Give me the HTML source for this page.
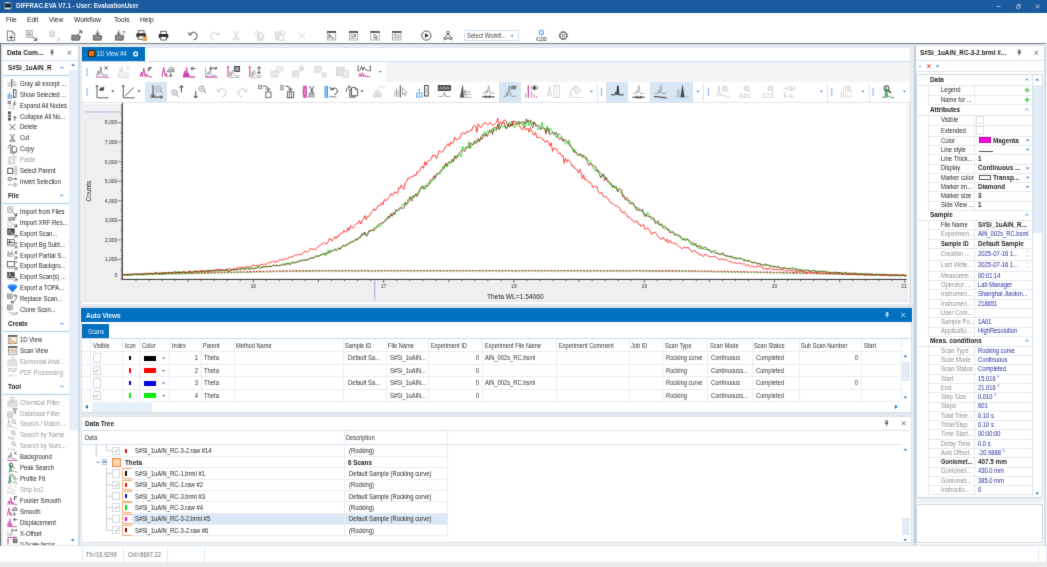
<!DOCTYPE html>
<html><head><meta charset="utf-8"><title>DIFFRAC.EVA V7.1</title>
<style>
html,body{margin:0;padding:0;background:#e4ebf3;}
body{width:1047px;height:567px;position:relative;overflow:hidden;font-family:"Liberation Sans",Arial,sans-serif;}
#app div,#app span{position:absolute;white-space:nowrap;}
#app{position:absolute;left:0;top:0;width:1047px;height:567px;overflow:hidden;}
#app{will-change:transform;}
svg{position:absolute;left:0;top:0;font-family:"Liberation Sans",Arial,sans-serif;}
</style></head><body>
<svg width="0" height="0" style="position:absolute"><defs><filter id="soft" x="0" y="0" width="100%" height="100%" color-interpolation-filters="sRGB"><feConvolveMatrix order="3" kernelMatrix="0.011 0.084 0.011 0.084 0.62 0.084 0.011 0.084 0.011" divisor="1" edgeMode="duplicate" preserveAlpha="true"/></filter></defs></svg>
<div id="app" style="filter:url(#soft)">
<div style="left:0px;top:0px;width:1047px;height:567px;background:#eef2f6;"></div>
<div style="left:0px;top:0px;width:1047px;height:12.8px;background:#1c5a9e;"></div>
<span style="top:1.35px;height:10px;line-height:10px;font-size:6.77px;color:#eef3f9;font-weight:bold;left:15.8px;transform:scaleX(0.906);transform-origin:0 50%;">DIFFRAC.EVA V7.1 - User: EvaluationUser</span>
<div style="left:3.6px;top:1.8px;width:8px;height:8.6px;background:#5b7f9e;border-radius:1px;"></div>
<div style="left:4.6px;top:3.6px;width:6px;height:3.4px;background:#1b2a38;"></div>
<div style="left:5.4px;top:7.6px;width:4.4px;height:1.6px;background:#dfe8f0;"></div>
<div style="left:6.2px;top:1.8px;width:3px;height:1.6px;background:#cfd8e0;"></div>
<div style="left:0px;top:12.8px;width:1047px;height:30.4px;background:#ffffff;"></div>
<span style="top:15.15px;height:10px;line-height:10px;font-size:6.99px;color:#222;left:5.7px;transform:scaleX(0.950);transform-origin:0 50%;">File</span>
<span style="top:15.15px;height:10px;line-height:10px;font-size:6.99px;color:#222;left:27px;transform:scaleX(0.950);transform-origin:0 50%;">Edit</span>
<span style="top:15.15px;height:10px;line-height:10px;font-size:6.99px;color:#222;left:49px;transform:scaleX(0.950);transform-origin:0 50%;">View</span>
<span style="top:15.15px;height:10px;line-height:10px;font-size:6.99px;color:#222;left:74.3px;transform:scaleX(0.950);transform-origin:0 50%;">Workflow</span>
<span style="top:15.15px;height:10px;line-height:10px;font-size:6.99px;color:#222;left:114px;transform:scaleX(0.950);transform-origin:0 50%;">Tools</span>
<span style="top:15.15px;height:10px;line-height:10px;font-size:6.99px;color:#222;left:140px;transform:scaleX(0.950);transform-origin:0 50%;">Help</span>
<div style="left:0px;top:43px;width:1046.2px;height:0.9px;background:#7d8186;"></div>
<div style="left:0px;top:43.9px;width:1046.2px;height:1.9px;background:#dfe6ec;"></div>
<div style="left:0px;top:43px;width:0.95px;height:503.3px;background:#6f7276;"></div>
<div style="left:0.95px;top:45.8px;width:1.8px;height:500.5px;background:#e4ebf1;"></div>
<div style="left:78px;top:45.8px;width:1.7px;height:500.5px;background:#d0dae2;"></div>
<div style="left:912.7px;top:45.8px;width:3.3px;height:500.5px;background:linear-gradient(90deg,#dfe6ec,#b8c7d2);"></div>
<div style="left:81px;top:305.8px;width:831.7px;height:1.9px;background:#d8dee3;"></div>
<div style="left:81px;top:413px;width:831.7px;height:2.6px;background:#e3e8ed;"></div>
<div style="left:0.95px;top:544.6px;width:1045.2px;height:1.7px;background:#dde5eb;"></div>
<div style="left:1044.2px;top:45.8px;width:1.9px;height:500.5px;background:#d5dee5;"></div>
<div style="left:463.5px;top:30.4px;width:55px;height:10.2px;background:#fff;border:0.6px solid #cfe0f0;box-sizing:border-box;"></div>
<span style="top:30.95px;height:10px;line-height:10px;font-size:6.45px;color:#444;left:467px;transform:scaleX(0.903);transform-origin:0 50%;">Select Workfl...</span>
<div style="left:2.75px;top:45.8px;width:75.25px;height:498.9px;background:#ffffff;"></div>
<span style="top:48.15px;height:10px;line-height:10px;font-size:6.88px;color:#1a1a1a;font-weight:bold;left:7.2px;transform:scaleX(0.967);transform-origin:0 50%;">Data Com...</span>
<div style="left:2.8px;top:60.2px;width:74.8px;height:0.8px;background:#cfdff0;"></div>
<div style="left:68.8px;top:70px;width:9.2px;height:359.5px;background:#e5eff9;"></div>
<span style="top:63.05px;height:10px;line-height:10px;font-size:6.77px;color:#1a1a1a;font-weight:bold;left:8.2px;transform:scaleX(0.937);transform-origin:0 50%;">S#Si_1uAlN_R</span>
<div style="left:2.8px;top:74.6px;width:66px;height:1px;background:#a9cdee;"></div>
<span style="top:190.75px;height:10px;line-height:10px;font-size:6.77px;color:#1a1a1a;font-weight:bold;left:8.2px;transform:scaleX(0.937);transform-origin:0 50%;">File</span>
<div style="left:2.8px;top:202.6px;width:66px;height:1px;background:#a9cdee;"></div>
<span style="top:319.05px;height:10px;line-height:10px;font-size:6.77px;color:#1a1a1a;font-weight:bold;left:8.2px;transform:scaleX(0.937);transform-origin:0 50%;">Create</span>
<div style="left:2.8px;top:331.3px;width:66px;height:1px;background:#a9cdee;"></div>
<span style="top:381.75px;height:10px;line-height:10px;font-size:6.77px;color:#1a1a1a;font-weight:bold;left:8.2px;transform:scaleX(0.937);transform-origin:0 50%;">Tool</span>
<div style="left:2.8px;top:393.6px;width:66px;height:1px;background:#a9cdee;"></div>
<span style="top:78.75px;height:10px;line-height:10px;font-size:6.67px;color:#262626;left:19.8px;transform:scaleX(0.893);transform-origin:0 50%;">Gray all except ...</span>
<span style="top:89.65px;height:10px;line-height:10px;font-size:6.67px;color:#262626;left:19.8px;transform:scaleX(0.893);transform-origin:0 50%;">Show Selected ...</span>
<span style="top:100.75px;height:10px;line-height:10px;font-size:6.67px;color:#262626;left:19.8px;transform:scaleX(0.893);transform-origin:0 50%;">Expand All Nodes</span>
<span style="top:111.55px;height:10px;line-height:10px;font-size:6.67px;color:#262626;left:19.8px;transform:scaleX(0.893);transform-origin:0 50%;">Collapse All No...</span>
<span style="top:122.45px;height:10px;line-height:10px;font-size:6.67px;color:#262626;left:19.8px;transform:scaleX(0.893);transform-origin:0 50%;">Delete</span>
<span style="top:133.35px;height:10px;line-height:10px;font-size:6.67px;color:#262626;left:19.8px;transform:scaleX(0.893);transform-origin:0 50%;">Cut</span>
<span style="top:144.35px;height:10px;line-height:10px;font-size:6.67px;color:#262626;left:19.8px;transform:scaleX(0.893);transform-origin:0 50%;">Copy</span>
<span style="top:155.35px;height:10px;line-height:10px;font-size:6.67px;color:#9a9a9a;left:19.8px;transform:scaleX(0.893);transform-origin:0 50%;">Paste</span>
<span style="top:166.15px;height:10px;line-height:10px;font-size:6.67px;color:#262626;left:19.8px;transform:scaleX(0.893);transform-origin:0 50%;">Select Parent</span>
<span style="top:177.05px;height:10px;line-height:10px;font-size:6.67px;color:#262626;left:19.8px;transform:scaleX(0.893);transform-origin:0 50%;">Invert Selection</span>
<span style="top:206.75px;height:10px;line-height:10px;font-size:6.67px;color:#262626;left:19.8px;transform:scaleX(0.893);transform-origin:0 50%;">Import from Files</span>
<span style="top:217.75px;height:10px;line-height:10px;font-size:6.67px;color:#262626;left:19.8px;transform:scaleX(0.893);transform-origin:0 50%;">Import XRF Res...</span>
<span style="top:228.75px;height:10px;line-height:10px;font-size:6.67px;color:#262626;left:19.8px;transform:scaleX(0.893);transform-origin:0 50%;">Export Scan...</span>
<span style="top:239.55px;height:10px;line-height:10px;font-size:6.67px;color:#262626;left:19.8px;transform:scaleX(0.893);transform-origin:0 50%;">Export Bg Subt...</span>
<span style="top:250.55px;height:10px;line-height:10px;font-size:6.67px;color:#262626;left:19.8px;transform:scaleX(0.893);transform-origin:0 50%;">Export Partial S...</span>
<span style="top:261.35px;height:10px;line-height:10px;font-size:6.67px;color:#262626;left:19.8px;transform:scaleX(0.893);transform-origin:0 50%;">Export Backgro...</span>
<span style="top:272.35px;height:10px;line-height:10px;font-size:6.67px;color:#262626;left:19.8px;transform:scaleX(0.893);transform-origin:0 50%;">Export Scan(s) ...</span>
<span style="top:283.35px;height:10px;line-height:10px;font-size:6.67px;color:#262626;left:19.8px;transform:scaleX(0.893);transform-origin:0 50%;">Export a TOPA...</span>
<span style="top:293.95px;height:10px;line-height:10px;font-size:6.67px;color:#262626;left:19.8px;transform:scaleX(0.893);transform-origin:0 50%;">Replace Scan...</span>
<span style="top:305.15px;height:10px;line-height:10px;font-size:6.67px;color:#262626;left:19.8px;transform:scaleX(0.893);transform-origin:0 50%;">Clone Scan...</span>
<span style="top:334.85px;height:10px;line-height:10px;font-size:6.67px;color:#262626;left:19.8px;transform:scaleX(0.893);transform-origin:0 50%;">1D View</span>
<span style="top:345.95px;height:10px;line-height:10px;font-size:6.67px;color:#262626;left:19.8px;transform:scaleX(0.893);transform-origin:0 50%;">Scan View</span>
<span style="top:356.75px;height:10px;line-height:10px;font-size:6.67px;color:#9a9a9a;left:19.8px;transform:scaleX(0.893);transform-origin:0 50%;">Elemental Anal...</span>
<span style="top:367.85px;height:10px;line-height:10px;font-size:6.67px;color:#9a9a9a;left:19.8px;transform:scaleX(0.893);transform-origin:0 50%;">PDF Processing</span>
<span style="top:397.75px;height:10px;line-height:10px;font-size:6.67px;color:#9a9a9a;left:19.8px;transform:scaleX(0.893);transform-origin:0 50%;">Chemical Filter</span>
<span style="top:408.65px;height:10px;line-height:10px;font-size:6.67px;color:#9a9a9a;left:19.8px;transform:scaleX(0.893);transform-origin:0 50%;">Database Filter</span>
<span style="top:419.35px;height:10px;line-height:10px;font-size:6.67px;color:#9a9a9a;left:19.8px;transform:scaleX(0.893);transform-origin:0 50%;">Search / Match ...</span>
<span style="top:430.35px;height:10px;line-height:10px;font-size:6.67px;color:#9a9a9a;left:19.8px;transform:scaleX(0.893);transform-origin:0 50%;">Search by Name</span>
<span style="top:441.35px;height:10px;line-height:10px;font-size:6.67px;color:#9a9a9a;left:19.8px;transform:scaleX(0.893);transform-origin:0 50%;">Search by Num...</span>
<span style="top:451.95px;height:10px;line-height:10px;font-size:6.67px;color:#262626;left:19.8px;transform:scaleX(0.893);transform-origin:0 50%;">Background</span>
<span style="top:463.05px;height:10px;line-height:10px;font-size:6.67px;color:#262626;left:19.8px;transform:scaleX(0.893);transform-origin:0 50%;">Peak Search</span>
<span style="top:473.95px;height:10px;line-height:10px;font-size:6.67px;color:#262626;left:19.8px;transform:scaleX(0.893);transform-origin:0 50%;">Profile Fit</span>
<span style="top:484.85px;height:10px;line-height:10px;font-size:6.67px;color:#9a9a9a;left:19.8px;transform:scaleX(0.893);transform-origin:0 50%;">Strip kα2</span>
<span style="top:495.95px;height:10px;line-height:10px;font-size:6.67px;color:#262626;left:19.8px;transform:scaleX(0.893);transform-origin:0 50%;">Fourier Smooth</span>
<span style="top:506.85px;height:10px;line-height:10px;font-size:6.67px;color:#262626;left:19.8px;transform:scaleX(0.893);transform-origin:0 50%;">Smooth</span>
<span style="top:517.75px;height:10px;line-height:10px;font-size:6.67px;color:#262626;left:19.8px;transform:scaleX(0.893);transform-origin:0 50%;">Displacement</span>
<span style="top:528.75px;height:10px;line-height:10px;font-size:6.67px;color:#262626;left:19.8px;transform:scaleX(0.893);transform-origin:0 50%;">X-Offset</span>
<div style="left:2.8px;top:538px;width:66px;height:6.6px;overflow:hidden;background:none"><span style="left:17px;top:0.5px;height:10px;line-height:10px;font-size:6.2px;color:#262626;letter-spacing:-0.24px">Y-Scale factor</span></div>
<div style="left:0px;top:546.3px;width:1047px;height:15.7px;background:#ffffff;"></div>
<div style="left:0px;top:562px;width:1047px;height:5px;background:#ebebeb;"></div>
<span style="top:549.95px;height:10px;line-height:10px;font-size:6.34px;color:#686868;left:86px;transform:scaleX(0.902);transform-origin:0 50%;">Th=16.9299</span>
<span style="top:549.95px;height:10px;line-height:10px;font-size:6.34px;color:#686868;left:128.4px;transform:scaleX(0.902);transform-origin:0 50%;">Cnt=8697.22</span>
<div style="left:81.5px;top:546.8px;width:0.8px;height:15.2px;background:#e1eaf4;"></div>
<div style="left:123px;top:546.8px;width:0.8px;height:15.2px;background:#e1eaf4;"></div>
<div style="left:167.4px;top:546.8px;width:0.8px;height:15.2px;background:#e1eaf4;"></div>
<div style="left:204px;top:546.8px;width:0.8px;height:15.2px;background:#e1eaf4;"></div>
<div style="left:1038.4px;top:546.8px;width:0.8px;height:15.2px;background:#e1eaf4;"></div>
<div style="left:1046.3px;top:546.8px;width:0.8px;height:15.2px;background:#e1eaf4;"></div>
<div style="left:81.4px;top:46.6px;width:830px;height:258px;background:#ffffff;border:0.7px solid #dbe3eb;box-sizing:border-box;"></div>
<div style="left:81.8px;top:46.8px;width:63.4px;height:14.1px;background:#0070c0;"></div>
<div style="left:88.2px;top:50.2px;width:6.4px;height:6.6px;background:#f36f0c;border:0.6px solid #3a2a1a;box-sizing:border-box;"></div>
<span style="top:49.25px;height:10px;line-height:10px;font-size:6.45px;color:#e8f1fa;left:97px;transform:scaleX(0.903);transform-origin:0 50%;">1D View #4</span>
<div style="left:81.8px;top:60.6px;width:828.2px;height:0.9px;background:#c7dcf0;"></div>
<div style="left:385.5px;top:61.6px;width:524.5px;height:20.2px;background:#f5f5f6;"></div>
<div style="left:145.2px;top:82.2px;width:21.7px;height:19.4px;background:#d6e6f4;"></div>
<div style="left:499.4px;top:82.2px;width:21.3px;height:19.4px;background:#d6e6f4;"></div>
<div style="left:606px;top:82.2px;width:21.7px;height:19.4px;background:#d6e6f4;"></div>
<div style="left:649.5px;top:82.2px;width:43.5px;height:19.4px;background:#d6e6f4;"></div>
<div style="left:596.8px;top:82.5px;width:0.8px;height:19px;background:#dfe6ee;"></div>
<div style="left:703.4px;top:82.5px;width:0.8px;height:19px;background:#dfe6ee;"></div>
<div style="left:826.7px;top:82.5px;width:0.8px;height:19px;background:#dfe6ee;"></div>
<div style="left:868.9px;top:82.5px;width:0.8px;height:19px;background:#dfe6ee;"></div>
<div style="left:81.8px;top:101.6px;width:828.2px;height:0.8px;background:#d0e0f0;"></div>
<div style="left:83.2px;top:102.4px;width:826.6px;height:199.9px;background:#ffffff;border:0.7px solid #dfe7ee;box-sizing:border-box;"></div>
<div style="left:84.4px;top:103.6px;width:824px;height:197px;background:#efefef;"></div>
<div style="left:122.6px;top:103.6px;width:784.5px;height:175.2px;background:#ffffff;"></div>
<div style="left:81.2px;top:307.7px;width:830.6px;height:105.3px;background:#ffffff;border:0.7px solid #d5dee6;box-sizing:border-box;"></div>
<div style="left:81.2px;top:307.7px;width:830.7px;height:14.1px;background:#0070c0;"></div>
<span style="top:310.65px;height:10px;line-height:10px;font-size:6.77px;color:#f2f7fc;font-weight:bold;left:85.6px;transform:scaleX(0.952);transform-origin:0 50%;">Auto Views</span>
<div style="left:82px;top:324px;width:27px;height:13.9px;background:#0070c0;"></div>
<span style="top:326.55px;height:10px;line-height:10px;font-size:6.45px;color:#e8f1fa;left:87.5px;transform:scaleX(0.903);transform-origin:0 50%;">Scans</span>
<div style="left:82px;top:338px;width:828px;height:0.8px;background:#c7dcf0;"></div>
<div style="left:82px;top:351.2px;width:818.8px;height:0.8px;background:#e9eef3;"></div>
<div style="left:82px;top:363.8px;width:818.8px;height:0.8px;background:#e9eef3;"></div>
<div style="left:82px;top:376.3px;width:818.8px;height:0.8px;background:#e9eef3;"></div>
<div style="left:82px;top:388.8px;width:818.8px;height:0.8px;background:#e9eef3;"></div>
<div style="left:82px;top:401.3px;width:818.8px;height:0.8px;background:#e9eef3;"></div>
<div style="left:90.2px;top:339px;width:0.8px;height:62.3px;background:#e9eef3;"></div>
<div style="left:122.3px;top:339px;width:0.8px;height:62.3px;background:#e9eef3;"></div>
<div style="left:139.3px;top:339px;width:0.8px;height:62.3px;background:#e9eef3;"></div>
<div style="left:169.3px;top:339px;width:0.8px;height:62.3px;background:#e9eef3;"></div>
<div style="left:200.6px;top:339px;width:0.8px;height:62.3px;background:#e9eef3;"></div>
<div style="left:233.6px;top:339px;width:0.8px;height:62.3px;background:#e9eef3;"></div>
<div style="left:342.7px;top:339px;width:0.8px;height:62.3px;background:#e9eef3;"></div>
<div style="left:385.7px;top:339px;width:0.8px;height:62.3px;background:#e9eef3;"></div>
<div style="left:428.2px;top:339px;width:0.8px;height:62.3px;background:#e9eef3;"></div>
<div style="left:482.3px;top:339px;width:0.8px;height:62.3px;background:#e9eef3;"></div>
<div style="left:556.2px;top:339px;width:0.8px;height:62.3px;background:#e9eef3;"></div>
<div style="left:628.8px;top:339px;width:0.8px;height:62.3px;background:#e9eef3;"></div>
<div style="left:662.1px;top:339px;width:0.8px;height:62.3px;background:#e9eef3;"></div>
<div style="left:707.2px;top:339px;width:0.8px;height:62.3px;background:#e9eef3;"></div>
<div style="left:751.8px;top:339px;width:0.8px;height:62.3px;background:#e9eef3;"></div>
<div style="left:798.5px;top:339px;width:0.8px;height:62.3px;background:#e9eef3;"></div>
<div style="left:861px;top:339px;width:0.8px;height:62.3px;background:#e9eef3;"></div>
<div style="left:900.8px;top:339px;width:0.8px;height:62.3px;background:#e9eef3;"></div>
<span style="top:340.75px;height:10px;line-height:10px;font-size:6.34px;color:#333;left:92.8px;transform:scaleX(0.895);transform-origin:0 50%;">Visible</span>
<span style="top:340.75px;height:10px;line-height:10px;font-size:6.34px;color:#333;left:124.9px;transform:scaleX(0.895);transform-origin:0 50%;">Icon</span>
<span style="top:340.75px;height:10px;line-height:10px;font-size:6.34px;color:#333;left:141.9px;transform:scaleX(0.895);transform-origin:0 50%;">Color</span>
<span style="top:340.75px;height:10px;line-height:10px;font-size:6.34px;color:#333;left:171.9px;transform:scaleX(0.895);transform-origin:0 50%;">Index</span>
<span style="top:340.75px;height:10px;line-height:10px;font-size:6.34px;color:#333;left:203.2px;transform:scaleX(0.895);transform-origin:0 50%;">Parent</span>
<span style="top:340.75px;height:10px;line-height:10px;font-size:6.34px;color:#333;left:236.2px;transform:scaleX(0.895);transform-origin:0 50%;">Method Name</span>
<span style="top:340.75px;height:10px;line-height:10px;font-size:6.34px;color:#333;left:345.3px;transform:scaleX(0.895);transform-origin:0 50%;">Sample ID</span>
<span style="top:340.75px;height:10px;line-height:10px;font-size:6.34px;color:#333;left:388.3px;transform:scaleX(0.895);transform-origin:0 50%;">File Name</span>
<span style="top:340.75px;height:10px;line-height:10px;font-size:6.34px;color:#333;left:430.8px;transform:scaleX(0.895);transform-origin:0 50%;">Experiment ID</span>
<span style="top:340.75px;height:10px;line-height:10px;font-size:6.34px;color:#333;left:484.9px;transform:scaleX(0.895);transform-origin:0 50%;">Experiment File Name</span>
<span style="top:340.75px;height:10px;line-height:10px;font-size:6.34px;color:#333;left:558.8px;transform:scaleX(0.895);transform-origin:0 50%;">Experiment Comment</span>
<span style="top:340.75px;height:10px;line-height:10px;font-size:6.34px;color:#333;left:631.4px;transform:scaleX(0.895);transform-origin:0 50%;">Job ID</span>
<span style="top:340.75px;height:10px;line-height:10px;font-size:6.34px;color:#333;left:664.7px;transform:scaleX(0.895);transform-origin:0 50%;">Scan Type</span>
<span style="top:340.75px;height:10px;line-height:10px;font-size:6.34px;color:#333;left:709.8px;transform:scaleX(0.895);transform-origin:0 50%;">Scan Mode</span>
<span style="top:340.75px;height:10px;line-height:10px;font-size:6.34px;color:#333;left:754.4px;transform:scaleX(0.895);transform-origin:0 50%;">Scan Status</span>
<span style="top:340.75px;height:10px;line-height:10px;font-size:6.34px;color:#333;left:801.1px;transform:scaleX(0.895);transform-origin:0 50%;">Sub Scan Number</span>
<span style="top:340.75px;height:10px;line-height:10px;font-size:6.34px;color:#333;left:863.6px;transform:scaleX(0.895);transform-origin:0 50%;">Start</span>
<div style="left:92.6px;top:353.4px;width:8.3px;height:9.3px;background:#fff;border:0.6px solid #d3dae1;box-sizing:border-box;"></div>
<div style="left:129.2px;top:355.7px;width:1.9px;height:4.6px;background:#000000;"></div>
<div style="left:144px;top:355.7px;width:12px;height:4.9px;background:#000000;"></div>
<span style="top:353.45px;height:10px;line-height:10px;font-size:6.45px;color:#333;left:-102px;width:300px;text-align:right;transform:scaleX(0.903);transform-origin:100% 50%;">1</span>
<span style="top:353.45px;height:10px;line-height:10px;font-size:6.45px;color:#333;left:203.8px;transform:scaleX(0.903);transform-origin:0 50%;">Theta</span>
<span style="top:353.45px;height:10px;line-height:10px;font-size:6.45px;color:#333;left:347.5px;transform:scaleX(0.903);transform-origin:0 50%;">Default Sa...</span>
<span style="top:353.45px;height:10px;line-height:10px;font-size:6.45px;color:#333;left:390.3px;transform:scaleX(0.896);transform-origin:0 50%;">S#Si_1uAlN...</span>
<span style="top:353.45px;height:10px;line-height:10px;font-size:6.45px;color:#333;left:179px;width:300px;text-align:right;transform:scaleX(0.903);transform-origin:100% 50%;">0</span>
<span style="top:353.45px;height:10px;line-height:10px;font-size:6.45px;color:#333;left:484.6px;transform:scaleX(0.896);transform-origin:0 50%;">AlN_002s_RC.bsml</span>
<span style="top:353.45px;height:10px;line-height:10px;font-size:6.45px;color:#333;left:666px;transform:scaleX(0.896);transform-origin:0 50%;">Rocking curve</span>
<span style="top:353.45px;height:10px;line-height:10px;font-size:6.45px;color:#333;left:711px;transform:scaleX(0.896);transform-origin:0 50%;">Continuous</span>
<span style="top:353.45px;height:10px;line-height:10px;font-size:6.45px;color:#333;left:756px;transform:scaleX(0.896);transform-origin:0 50%;">Completed</span>
<span style="top:353.45px;height:10px;line-height:10px;font-size:6.45px;color:#333;left:558px;width:300px;text-align:right;transform:scaleX(0.903);transform-origin:100% 50%;">0</span>
<div style="left:92.6px;top:365.9px;width:8.3px;height:9.3px;background:#fff;border:0.6px solid #d3dae1;box-sizing:border-box;"></div>
<div style="left:129.2px;top:368.2px;width:1.9px;height:4.6px;background:#ff0000;"></div>
<div style="left:144px;top:368.2px;width:12px;height:4.9px;background:#ff0000;"></div>
<span style="top:365.95px;height:10px;line-height:10px;font-size:6.45px;color:#333;left:-102px;width:300px;text-align:right;transform:scaleX(0.903);transform-origin:100% 50%;">2</span>
<span style="top:365.95px;height:10px;line-height:10px;font-size:6.45px;color:#333;left:203.8px;transform:scaleX(0.903);transform-origin:0 50%;">Theta</span>
<span style="top:365.95px;height:10px;line-height:10px;font-size:6.45px;color:#333;left:390.3px;transform:scaleX(0.896);transform-origin:0 50%;">S#Si_1uAlN...</span>
<span style="top:365.95px;height:10px;line-height:10px;font-size:6.45px;color:#333;left:179px;width:300px;text-align:right;transform:scaleX(0.903);transform-origin:100% 50%;">0</span>
<span style="top:365.95px;height:10px;line-height:10px;font-size:6.45px;color:#333;left:666px;transform:scaleX(0.896);transform-origin:0 50%;">Rocking</span>
<span style="top:365.95px;height:10px;line-height:10px;font-size:6.45px;color:#333;left:711px;transform:scaleX(0.896);transform-origin:0 50%;">Continuouss...</span>
<span style="top:365.95px;height:10px;line-height:10px;font-size:6.45px;color:#333;left:756px;transform:scaleX(0.896);transform-origin:0 50%;">Completed</span>
<div style="left:92.6px;top:378.4px;width:8.3px;height:9.3px;background:#fff;border:0.6px solid #d3dae1;box-sizing:border-box;"></div>
<div style="left:129.2px;top:380.7px;width:1.9px;height:4.6px;background:#0000e0;"></div>
<div style="left:144px;top:380.7px;width:12px;height:4.9px;background:#0000e0;"></div>
<span style="top:378.45px;height:10px;line-height:10px;font-size:6.45px;color:#333;left:-102px;width:300px;text-align:right;transform:scaleX(0.903);transform-origin:100% 50%;">3</span>
<span style="top:378.45px;height:10px;line-height:10px;font-size:6.45px;color:#333;left:203.8px;transform:scaleX(0.903);transform-origin:0 50%;">Theta</span>
<span style="top:378.45px;height:10px;line-height:10px;font-size:6.45px;color:#333;left:347.5px;transform:scaleX(0.903);transform-origin:0 50%;">Default Sa...</span>
<span style="top:378.45px;height:10px;line-height:10px;font-size:6.45px;color:#333;left:390.3px;transform:scaleX(0.896);transform-origin:0 50%;">S#Si_1uAlN...</span>
<span style="top:378.45px;height:10px;line-height:10px;font-size:6.45px;color:#333;left:179px;width:300px;text-align:right;transform:scaleX(0.903);transform-origin:100% 50%;">0</span>
<span style="top:378.45px;height:10px;line-height:10px;font-size:6.45px;color:#333;left:484.6px;transform:scaleX(0.896);transform-origin:0 50%;">AlN_002s_RC.bsml</span>
<span style="top:378.45px;height:10px;line-height:10px;font-size:6.45px;color:#333;left:666px;transform:scaleX(0.896);transform-origin:0 50%;">Rocking curve</span>
<span style="top:378.45px;height:10px;line-height:10px;font-size:6.45px;color:#333;left:711px;transform:scaleX(0.896);transform-origin:0 50%;">Continuous</span>
<span style="top:378.45px;height:10px;line-height:10px;font-size:6.45px;color:#333;left:756px;transform:scaleX(0.896);transform-origin:0 50%;">Completed</span>
<span style="top:378.45px;height:10px;line-height:10px;font-size:6.45px;color:#333;left:558px;width:300px;text-align:right;transform:scaleX(0.903);transform-origin:100% 50%;">0</span>
<div style="left:92.6px;top:390.9px;width:8.3px;height:9.3px;background:#fff;border:0.6px solid #d3dae1;box-sizing:border-box;"></div>
<div style="left:129.2px;top:393.2px;width:1.9px;height:4.6px;background:#00ee00;"></div>
<div style="left:144px;top:393.2px;width:12px;height:4.9px;background:#00ee00;"></div>
<span style="top:390.95px;height:10px;line-height:10px;font-size:6.45px;color:#333;left:-102px;width:300px;text-align:right;transform:scaleX(0.903);transform-origin:100% 50%;">4</span>
<span style="top:390.95px;height:10px;line-height:10px;font-size:6.45px;color:#333;left:203.8px;transform:scaleX(0.903);transform-origin:0 50%;">Theta</span>
<span style="top:390.95px;height:10px;line-height:10px;font-size:6.45px;color:#333;left:390.3px;transform:scaleX(0.896);transform-origin:0 50%;">S#Si_1uAlN...</span>
<span style="top:390.95px;height:10px;line-height:10px;font-size:6.45px;color:#333;left:179px;width:300px;text-align:right;transform:scaleX(0.903);transform-origin:100% 50%;">0</span>
<span style="top:390.95px;height:10px;line-height:10px;font-size:6.45px;color:#333;left:666px;transform:scaleX(0.896);transform-origin:0 50%;">Rocking</span>
<span style="top:390.95px;height:10px;line-height:10px;font-size:6.45px;color:#333;left:711px;transform:scaleX(0.896);transform-origin:0 50%;">Continuouss...</span>
<span style="top:390.95px;height:10px;line-height:10px;font-size:6.45px;color:#333;left:756px;transform:scaleX(0.896);transform-origin:0 50%;">Completed</span>
<div style="left:91.8px;top:402.8px;width:59.8px;height:8.8px;background:#e5eff8;"></div>
<div style="left:901.6px;top:361.8px;width:8px;height:19.5px;background:#e1ecf7;"></div>
<div style="left:81.1px;top:415.7px;width:830.7px;height:127.3px;background:#ffffff;border:0.7px solid #dbe3eb;box-sizing:border-box;"></div>
<span style="top:418.65px;height:10px;line-height:10px;font-size:6.77px;color:#1a1a1a;font-weight:bold;left:85.4px;transform:scaleX(0.952);transform-origin:0 50%;">Data Tree</span>
<div style="left:81.6px;top:430.2px;width:828.8px;height:0.8px;background:#d5e2ef;"></div>
<span style="top:432.75px;height:10px;line-height:10px;font-size:6.34px;color:#333;left:84.8px;transform:scaleX(0.902);transform-origin:0 50%;">Data</span>
<span style="top:432.75px;height:10px;line-height:10px;font-size:6.34px;color:#333;left:346.2px;transform:scaleX(0.902);transform-origin:0 50%;">Description</span>
<div style="left:81.6px;top:444.4px;width:819.4px;height:0.8px;background:#d5e2ef;"></div>
<div style="left:123px;top:512.9px;width:324px;height:11px;background:#dbe8f5;"></div>
<div style="left:122.6px;top:456px;width:324.4px;height:0.7px;background:#e9eef3;"></div>
<div style="left:122.6px;top:467.3px;width:324.4px;height:0.7px;background:#e9eef3;"></div>
<div style="left:122.6px;top:478.7px;width:324.4px;height:0.7px;background:#e9eef3;"></div>
<div style="left:122.6px;top:490px;width:324.4px;height:0.7px;background:#e9eef3;"></div>
<div style="left:122.6px;top:501.4px;width:324.4px;height:0.7px;background:#e9eef3;"></div>
<div style="left:122.6px;top:512.7px;width:324.4px;height:0.7px;background:#e9eef3;"></div>
<div style="left:122.6px;top:524px;width:324.4px;height:0.7px;background:#e9eef3;"></div>
<div style="left:122.6px;top:535.4px;width:324.4px;height:0.7px;background:#e9eef3;"></div>
<div style="left:100px;top:456px;width:347px;height:0.7px;background:#e9eef3;"></div>
<div style="left:343.5px;top:431px;width:0.8px;height:104.4px;background:#e9eef3;"></div>
<div style="left:447px;top:431px;width:0.8px;height:104.4px;background:#e9eef3;"></div>
<div style="left:112.2px;top:446.7px;width:8px;height:8.3px;background:#fff;border:0.6px solid #d3dae1;box-sizing:border-box;"></div>
<div style="left:125.4px;top:448.5px;width:1.9px;height:4.6px;background:#ee1111;"></div>
<span style="top:446.15px;height:10px;line-height:10px;font-size:6.56px;color:#262626;left:134.6px;transform:scaleX(0.898);transform-origin:0 50%;">S#Si_1uAlN_RC-3-2.raw #14</span>
<span style="top:446.15px;height:10px;line-height:10px;font-size:6.56px;color:#262626;left:348.6px;transform:scaleX(0.891);transform-origin:0 50%;">(Rocking)</span>
<span style="top:457.5px;height:10px;line-height:10px;font-size:6.77px;color:#1a1a1a;font-weight:bold;left:125.3px;transform:scaleX(0.937);transform-origin:0 50%;">Theta</span>
<span style="top:457.5px;height:10px;line-height:10px;font-size:6.77px;color:#1a1a1a;font-weight:bold;left:348px;transform:scaleX(0.937);transform-origin:0 50%;">6 Scans</span>
<div style="left:112.2px;top:457.55px;width:9px;height:9.2px;background:#fbd5b8;border:0.9px solid #f08a3c;box-sizing:border-box;"></div>
<div style="left:101.8px;top:459.35px;width:5.4px;height:5.6px;background:#fff;border:0.6px solid #b9c4cf;box-sizing:border-box;"></div>
<div style="left:103.3px;top:460.95px;width:2.4px;height:2.4px;background:#5aa0e0;"></div>
<div style="left:112.2px;top:469.4px;width:8px;height:8.3px;background:#fff;border:0.6px solid #d3dae1;box-sizing:border-box;"></div>
<div style="left:121.6px;top:468.3px;width:10px;height:10.6px;background:#fff;border:1px solid #f7ab73;border-right:none;border-radius:1.2px 0 0 1.2px;box-sizing:border-box;"></div>
<div style="left:125.4px;top:471.2px;width:1.9px;height:4.6px;background:#111111;"></div>
<span style="top:468.85px;height:10px;line-height:10px;font-size:6.56px;color:#262626;left:134.6px;transform:scaleX(0.898);transform-origin:0 50%;">S#Si_1uAlN_RC-1.brml #1</span>
<span style="top:468.85px;height:10px;line-height:10px;font-size:6.56px;color:#262626;left:348.6px;transform:scaleX(0.891);transform-origin:0 50%;">Default Sample (Rocking curve)</span>
<div style="left:112.2px;top:480.75px;width:8px;height:8.3px;background:#fff;border:0.6px solid #d3dae1;box-sizing:border-box;"></div>
<div style="left:121.6px;top:479.65px;width:10px;height:10.6px;background:#fff;border:1px solid #f7ab73;border-right:none;border-radius:1.2px 0 0 1.2px;box-sizing:border-box;"></div>
<div style="left:125.4px;top:482.55px;width:1.9px;height:4.6px;background:#ee1111;"></div>
<span style="top:480.2px;height:10px;line-height:10px;font-size:6.56px;color:#262626;left:134.6px;transform:scaleX(0.898);transform-origin:0 50%;">S#Si_1uAlN_RC-1.raw #2</span>
<span style="top:480.2px;height:10px;line-height:10px;font-size:6.56px;color:#262626;left:348.6px;transform:scaleX(0.891);transform-origin:0 50%;">(Rocking)</span>
<div style="left:112.2px;top:492.1px;width:8px;height:8.3px;background:#fff;border:0.6px solid #d3dae1;box-sizing:border-box;"></div>
<div style="left:121.6px;top:491px;width:10px;height:10.6px;background:#fff;border:1px solid #f7ab73;border-right:none;border-radius:1.2px 0 0 1.2px;box-sizing:border-box;"></div>
<div style="left:125.4px;top:493.9px;width:1.9px;height:4.6px;background:#1111dd;"></div>
<span style="top:491.55px;height:10px;line-height:10px;font-size:6.56px;color:#262626;left:134.6px;transform:scaleX(0.898);transform-origin:0 50%;">S#Si_1uAlN_RC-3.brml #3</span>
<span style="top:491.55px;height:10px;line-height:10px;font-size:6.56px;color:#262626;left:348.6px;transform:scaleX(0.891);transform-origin:0 50%;">Default Sample (Rocking curve)</span>
<div style="left:112.2px;top:503.45px;width:8px;height:8.3px;background:#fff;border:0.6px solid #d3dae1;box-sizing:border-box;"></div>
<div style="left:121.6px;top:502.35px;width:10px;height:10.6px;background:#fff;border:1px solid #f7ab73;border-right:none;border-radius:1.2px 0 0 1.2px;box-sizing:border-box;"></div>
<div style="left:125.4px;top:505.25px;width:1.9px;height:4.6px;background:#11dd11;"></div>
<span style="top:502.9px;height:10px;line-height:10px;font-size:6.56px;color:#262626;left:134.6px;transform:scaleX(0.898);transform-origin:0 50%;">S#Si_1uAlN_RC-3.raw #4</span>
<span style="top:502.9px;height:10px;line-height:10px;font-size:6.56px;color:#262626;left:348.6px;transform:scaleX(0.891);transform-origin:0 50%;">(Rocking)</span>
<div style="left:112.2px;top:514.75px;width:8px;height:8.3px;background:#fff;border:0.6px solid #d3dae1;box-sizing:border-box;"></div>
<div style="left:121.6px;top:513.65px;width:10px;height:10.6px;background:#fff;border:1px solid #f7ab73;border-right:none;border-radius:1.2px 0 0 1.2px;box-sizing:border-box;"></div>
<div style="left:125.4px;top:516.55px;width:1.9px;height:4.6px;background:#ee11ee;"></div>
<span style="top:514.2px;height:10px;line-height:10px;font-size:6.56px;color:#262626;left:134.6px;transform:scaleX(0.898);transform-origin:0 50%;">S#Si_1uAlN_RC-3-2.brml #5</span>
<span style="top:514.2px;height:10px;line-height:10px;font-size:6.56px;color:#262626;left:348.6px;transform:scaleX(0.891);transform-origin:0 50%;">Default Sample (Rocking curve)</span>
<div style="left:112.2px;top:526.1px;width:8px;height:8.3px;background:#fff;border:0.6px solid #d3dae1;box-sizing:border-box;"></div>
<div style="left:121.6px;top:525px;width:10px;height:10.6px;background:#fff;border:1px solid #f7ab73;border-right:none;border-radius:1.2px 0 0 1.2px;box-sizing:border-box;"></div>
<div style="left:125.4px;top:527.9px;width:1.9px;height:4.6px;background:#7a1010;"></div>
<span style="top:525.55px;height:10px;line-height:10px;font-size:6.56px;color:#262626;left:134.6px;transform:scaleX(0.898);transform-origin:0 50%;">S#Si_1uAlN_RC-3-2.raw #6</span>
<span style="top:525.55px;height:10px;line-height:10px;font-size:6.56px;color:#262626;left:348.6px;transform:scaleX(0.891);transform-origin:0 50%;">(Rocking)</span>
<div style="left:902px;top:517.6px;width:8px;height:17px;background:#e1ecf7;"></div>
<div style="left:916px;top:45.8px;width:128.2px;height:498.6px;background:#ffffff;"></div>
<span style="top:48.15px;height:10px;line-height:10px;font-size:6.77px;color:#1a1a1a;font-weight:bold;left:919.7px;transform:scaleX(0.943);transform-origin:0 50%;">S#Si_1uAlN_RC-3-2.brml #...</span>
<div style="left:916px;top:60.3px;width:128.2px;height:0.8px;background:#d5e2ef;"></div>
<div style="left:916px;top:71.2px;width:128.2px;height:0.8px;background:#dbe5ef;"></div>
<div style="left:916.4px;top:74.4px;width:126.2px;height:423.6px;background:#fff;border:0.6px solid #ccd9e6;box-sizing:border-box;"></div>
<div style="left:1032.2px;top:74.8px;width:0.7px;height:422.8px;background:#d5e2ef;"></div>
<div style="left:1033.2px;top:85px;width:9px;height:148.4px;background:#e1ecf7;"></div>
<span style="top:75.05px;height:10px;line-height:10px;font-size:6.77px;color:#1a1a1a;font-weight:bold;left:929.8px;transform:scaleX(0.943);transform-origin:0 50%;">Data</span>
<div style="left:917px;top:85px;width:115.6px;height:0.7px;background:#e5eaf0;"></div>
<div style="left:927.6px;top:95px;width:105px;height:0.7px;background:#e5eaf0;"></div>
<div style="left:927.6px;top:84.5px;width:0.7px;height:11px;background:#e5eaf0;"></div>
<div style="left:974.2px;top:84.5px;width:0.7px;height:11px;background:#e5eaf0;"></div>
<span style="top:85.25px;height:10px;line-height:10px;font-size:6.56px;color:#262626;left:940.6px;transform:scaleX(0.898);transform-origin:0 50%;width:36.7623px;overflow:hidden;">Legend</span>
<div style="left:927.6px;top:104.4px;width:105px;height:0.7px;background:#e5eaf0;"></div>
<div style="left:927.6px;top:94.5px;width:0.7px;height:10.4px;background:#e5eaf0;"></div>
<div style="left:974.2px;top:94.5px;width:0.7px;height:10.4px;background:#e5eaf0;"></div>
<span style="top:94.95px;height:10px;line-height:10px;font-size:6.56px;color:#262626;left:940.6px;transform:scaleX(0.898);transform-origin:0 50%;width:36.7623px;overflow:hidden;">Name for ...</span>
<span style="top:104.75px;height:10px;line-height:10px;font-size:6.77px;color:#1a1a1a;font-weight:bold;left:929.8px;transform:scaleX(0.943);transform-origin:0 50%;">Attributes</span>
<div style="left:917px;top:114.6px;width:115.6px;height:0.7px;background:#e5eaf0;"></div>
<div style="left:927.6px;top:125.2px;width:105px;height:0.7px;background:#e5eaf0;"></div>
<div style="left:927.6px;top:114.1px;width:0.7px;height:11.6px;background:#e5eaf0;"></div>
<div style="left:974.2px;top:114.1px;width:0.7px;height:11.6px;background:#e5eaf0;"></div>
<span style="top:115.15px;height:10px;line-height:10px;font-size:6.56px;color:#262626;left:940.6px;transform:scaleX(0.898);transform-origin:0 50%;width:36.7623px;overflow:hidden;">Visible</span>
<div style="left:975.8px;top:115.6px;width:8.6px;height:8.6px;background:#fff;border:0.6px solid #dbe1e7;box-sizing:border-box;"></div>
<div style="left:927.6px;top:135.6px;width:105px;height:0.7px;background:#e5eaf0;"></div>
<div style="left:927.6px;top:124.7px;width:0.7px;height:11.4px;background:#e5eaf0;"></div>
<div style="left:974.2px;top:124.7px;width:0.7px;height:11.4px;background:#e5eaf0;"></div>
<span style="top:125.65px;height:10px;line-height:10px;font-size:6.56px;color:#262626;left:940.6px;transform:scaleX(0.898);transform-origin:0 50%;width:36.7623px;overflow:hidden;">Extended</span>
<div style="left:975.8px;top:126.1px;width:8.6px;height:8.6px;background:#fff;border:0.6px solid #dbe1e7;box-sizing:border-box;"></div>
<div style="left:927.6px;top:144.9px;width:105px;height:0.7px;background:#e5eaf0;"></div>
<div style="left:927.6px;top:135.1px;width:0.7px;height:10.3px;background:#e5eaf0;"></div>
<div style="left:974.2px;top:135.1px;width:0.7px;height:10.3px;background:#e5eaf0;"></div>
<span style="top:135.5px;height:10px;line-height:10px;font-size:6.56px;color:#262626;left:940.6px;transform:scaleX(0.898);transform-origin:0 50%;width:36.7623px;overflow:hidden;">Color</span>
<div style="left:978.8px;top:137.45px;width:12px;height:5.6px;background:#ff00e0;border:0.6px solid #b010b0;box-sizing:border-box;"></div>
<span style="top:135.5px;height:10px;line-height:10px;font-size:6.67px;color:#262626;font-weight:bold;left:993.4px;transform:scaleX(0.952);transform-origin:0 50%;">Magenta</span>
<div style="left:927.6px;top:154.2px;width:105px;height:0.7px;background:#e5eaf0;"></div>
<div style="left:927.6px;top:144.4px;width:0.7px;height:10.3px;background:#e5eaf0;"></div>
<div style="left:974.2px;top:144.4px;width:0.7px;height:10.3px;background:#e5eaf0;"></div>
<span style="top:144.8px;height:10px;line-height:10px;font-size:6.56px;color:#262626;left:940.6px;transform:scaleX(0.898);transform-origin:0 50%;width:36.7623px;overflow:hidden;">Line style</span>
<div style="left:978.6px;top:151.05px;width:14px;height:0.6px;background:#555;"></div>
<div style="left:927.6px;top:163.5px;width:105px;height:0.7px;background:#e5eaf0;"></div>
<div style="left:927.6px;top:153.7px;width:0.7px;height:10.3px;background:#e5eaf0;"></div>
<div style="left:974.2px;top:153.7px;width:0.7px;height:10.3px;background:#e5eaf0;"></div>
<span style="top:154.1px;height:10px;line-height:10px;font-size:6.56px;color:#262626;left:940.6px;transform:scaleX(0.898);transform-origin:0 50%;width:36.7623px;overflow:hidden;">Line Thick...</span>
<span style="top:154.1px;height:10px;line-height:10px;font-size:6.67px;color:#262626;font-weight:bold;left:977.8px;transform:scaleX(0.952);transform-origin:0 50%;">1</span>
<div style="left:927.6px;top:172.9px;width:105px;height:0.7px;background:#e5eaf0;"></div>
<div style="left:927.6px;top:163px;width:0.7px;height:10.4px;background:#e5eaf0;"></div>
<div style="left:974.2px;top:163px;width:0.7px;height:10.4px;background:#e5eaf0;"></div>
<span style="top:163.45px;height:10px;line-height:10px;font-size:6.56px;color:#262626;left:940.6px;transform:scaleX(0.898);transform-origin:0 50%;width:36.7623px;overflow:hidden;">Display</span>
<span style="top:163.45px;height:10px;line-height:10px;font-size:6.67px;color:#262626;font-weight:bold;left:977.8px;transform:scaleX(0.952);transform-origin:0 50%;">Continuous ...</span>
<div style="left:927.6px;top:182.2px;width:105px;height:0.7px;background:#e5eaf0;"></div>
<div style="left:927.6px;top:172.4px;width:0.7px;height:10.3px;background:#e5eaf0;"></div>
<div style="left:974.2px;top:172.4px;width:0.7px;height:10.3px;background:#e5eaf0;"></div>
<span style="top:172.8px;height:10px;line-height:10px;font-size:6.56px;color:#262626;left:940.6px;transform:scaleX(0.898);transform-origin:0 50%;width:36.7623px;overflow:hidden;">Marker color</span>
<div style="left:978.8px;top:174.75px;width:12px;height:5.6px;background:#ffffff;border:0.6px solid #555;box-sizing:border-box;"></div>
<span style="top:172.8px;height:10px;line-height:10px;font-size:6.67px;color:#262626;font-weight:bold;left:993.4px;transform:scaleX(0.952);transform-origin:0 50%;">Transp...</span>
<div style="left:927.6px;top:191.4px;width:105px;height:0.7px;background:#e5eaf0;"></div>
<div style="left:927.6px;top:181.7px;width:0.7px;height:10.2px;background:#e5eaf0;"></div>
<div style="left:974.2px;top:181.7px;width:0.7px;height:10.2px;background:#e5eaf0;"></div>
<span style="top:182.05px;height:10px;line-height:10px;font-size:6.56px;color:#262626;left:940.6px;transform:scaleX(0.898);transform-origin:0 50%;width:36.7623px;overflow:hidden;">Marker im...</span>
<span style="top:182.05px;height:10px;line-height:10px;font-size:6.67px;color:#262626;font-weight:bold;left:977.8px;transform:scaleX(0.952);transform-origin:0 50%;">Diamond</span>
<div style="left:927.6px;top:200.6px;width:105px;height:0.7px;background:#e5eaf0;"></div>
<div style="left:927.6px;top:190.9px;width:0.7px;height:10.2px;background:#e5eaf0;"></div>
<div style="left:974.2px;top:190.9px;width:0.7px;height:10.2px;background:#e5eaf0;"></div>
<span style="top:191.25px;height:10px;line-height:10px;font-size:6.56px;color:#262626;left:940.6px;transform:scaleX(0.898);transform-origin:0 50%;width:36.7623px;overflow:hidden;">Marker size</span>
<span style="top:191.25px;height:10px;line-height:10px;font-size:6.67px;color:#262626;font-weight:bold;left:977.8px;transform:scaleX(0.952);transform-origin:0 50%;">3</span>
<div style="left:927.6px;top:209.8px;width:105px;height:0.7px;background:#e5eaf0;"></div>
<div style="left:927.6px;top:200.1px;width:0.7px;height:10.2px;background:#e5eaf0;"></div>
<div style="left:974.2px;top:200.1px;width:0.7px;height:10.2px;background:#e5eaf0;"></div>
<span style="top:200.45px;height:10px;line-height:10px;font-size:6.56px;color:#262626;left:940.6px;transform:scaleX(0.898);transform-origin:0 50%;width:36.7623px;overflow:hidden;">Side View ...</span>
<span style="top:200.45px;height:10px;line-height:10px;font-size:6.67px;color:#262626;font-weight:bold;left:977.8px;transform:scaleX(0.952);transform-origin:0 50%;">1</span>
<span style="top:210.15px;height:10px;line-height:10px;font-size:6.77px;color:#1a1a1a;font-weight:bold;left:929.8px;transform:scaleX(0.943);transform-origin:0 50%;">Sample</span>
<div style="left:917px;top:220px;width:115.6px;height:0.7px;background:#e5eaf0;"></div>
<div style="left:927.6px;top:229.4px;width:105px;height:0.7px;background:#e5eaf0;"></div>
<div style="left:927.6px;top:219.5px;width:0.7px;height:10.4px;background:#e5eaf0;"></div>
<div style="left:974.2px;top:219.5px;width:0.7px;height:10.4px;background:#e5eaf0;"></div>
<span style="top:219.95px;height:10px;line-height:10px;font-size:6.56px;color:#262626;left:940.6px;transform:scaleX(0.898);transform-origin:0 50%;width:36.7623px;overflow:hidden;">File Name</span>
<span style="top:219.95px;height:10px;line-height:10px;font-size:6.67px;color:#262626;font-weight:bold;left:977.8px;transform:scaleX(0.952);transform-origin:0 50%;">S#Si_1uAlN_R...</span>
<div style="left:927.6px;top:238.7px;width:105px;height:0.7px;background:#e5eaf0;"></div>
<div style="left:927.6px;top:228.9px;width:0.7px;height:10.3px;background:#e5eaf0;"></div>
<div style="left:974.2px;top:228.9px;width:0.7px;height:10.3px;background:#e5eaf0;"></div>
<span style="top:229.3px;height:10px;line-height:10px;font-size:6.56px;color:#8f8f8f;left:940.6px;transform:scaleX(0.898);transform-origin:0 50%;width:36.7623px;overflow:hidden;">Experimen...</span>
<span style="top:229.3px;height:10px;line-height:10px;font-size:6.56px;color:#2a2a9a;left:977.8px;transform:scaleX(0.885);transform-origin:0 50%;">AlN_002s_RC.bsml</span>
<div style="left:927.6px;top:248.1px;width:105px;height:0.7px;background:#e5eaf0;"></div>
<div style="left:927.6px;top:238.2px;width:0.7px;height:10.4px;background:#e5eaf0;"></div>
<div style="left:974.2px;top:238.2px;width:0.7px;height:10.4px;background:#e5eaf0;"></div>
<span style="top:238.65px;height:10px;line-height:10px;font-size:6.56px;color:#262626;font-weight:bold;left:940.6px;transform:scaleX(0.872);transform-origin:0 50%;width:37.8317px;overflow:hidden;">Sample ID</span>
<span style="top:238.65px;height:10px;line-height:10px;font-size:6.67px;color:#262626;font-weight:bold;left:977.8px;transform:scaleX(0.952);transform-origin:0 50%;">Default Sample</span>
<div style="left:927.6px;top:259.5px;width:105px;height:0.7px;background:#e5eaf0;"></div>
<div style="left:927.6px;top:247.6px;width:0.7px;height:12.4px;background:#e5eaf0;"></div>
<div style="left:974.2px;top:247.6px;width:0.7px;height:12.4px;background:#e5eaf0;"></div>
<span style="top:249.05px;height:10px;line-height:10px;font-size:6.56px;color:#8f8f8f;left:940.6px;transform:scaleX(0.898);transform-origin:0 50%;width:36.7623px;overflow:hidden;">Creation ...</span>
<span style="top:249.05px;height:10px;line-height:10px;font-size:6.56px;color:#2a2a9a;left:977.8px;transform:scaleX(0.904);transform-origin:0 50%;">2025-07-16 1...</span>
<div style="left:927.6px;top:270.8px;width:105px;height:0.7px;background:#e5eaf0;"></div>
<div style="left:927.6px;top:259px;width:0.7px;height:12.3px;background:#e5eaf0;"></div>
<div style="left:974.2px;top:259px;width:0.7px;height:12.3px;background:#e5eaf0;"></div>
<span style="top:260.4px;height:10px;line-height:10px;font-size:6.56px;color:#8f8f8f;left:940.6px;transform:scaleX(0.898);transform-origin:0 50%;width:36.7623px;overflow:hidden;">Last Write...</span>
<span style="top:260.4px;height:10px;line-height:10px;font-size:6.56px;color:#2a2a9a;left:977.8px;transform:scaleX(0.904);transform-origin:0 50%;">2025-07-16 1...</span>
<div style="left:927.6px;top:280px;width:105px;height:0.7px;background:#e5eaf0;"></div>
<div style="left:927.6px;top:270.3px;width:0.7px;height:10.2px;background:#e5eaf0;"></div>
<div style="left:974.2px;top:270.3px;width:0.7px;height:10.2px;background:#e5eaf0;"></div>
<span style="top:270.65px;height:10px;line-height:10px;font-size:6.56px;color:#8f8f8f;left:940.6px;transform:scaleX(0.898);transform-origin:0 50%;width:36.7623px;overflow:hidden;">Measurem...</span>
<span style="top:270.65px;height:10px;line-height:10px;font-size:6.56px;color:#2a2a9a;left:977.8px;transform:scaleX(0.885);transform-origin:0 50%;">00:01:14</span>
<div style="left:927.6px;top:289.3px;width:105px;height:0.7px;background:#e5eaf0;"></div>
<div style="left:927.6px;top:279.5px;width:0.7px;height:10.3px;background:#e5eaf0;"></div>
<div style="left:974.2px;top:279.5px;width:0.7px;height:10.3px;background:#e5eaf0;"></div>
<span style="top:279.9px;height:10px;line-height:10px;font-size:6.56px;color:#8f8f8f;left:940.6px;transform:scaleX(0.898);transform-origin:0 50%;width:36.7623px;overflow:hidden;">Operator ...</span>
<span style="top:279.9px;height:10px;line-height:10px;font-size:6.56px;color:#2a2a9a;left:977.8px;transform:scaleX(0.885);transform-origin:0 50%;">Lab Manager</span>
<div style="left:927.6px;top:298.6px;width:105px;height:0.7px;background:#e5eaf0;"></div>
<div style="left:927.6px;top:288.8px;width:0.7px;height:10.3px;background:#e5eaf0;"></div>
<div style="left:974.2px;top:288.8px;width:0.7px;height:10.3px;background:#e5eaf0;"></div>
<span style="top:289.2px;height:10px;line-height:10px;font-size:6.56px;color:#8f8f8f;left:940.6px;transform:scaleX(0.898);transform-origin:0 50%;width:36.7623px;overflow:hidden;">Instrumen...</span>
<span style="top:289.2px;height:10px;line-height:10px;font-size:6.56px;color:#2a2a9a;left:977.8px;transform:scaleX(0.885);transform-origin:0 50%;">Shanghai Jiaoton...</span>
<div style="left:927.6px;top:307.9px;width:105px;height:0.7px;background:#e5eaf0;"></div>
<div style="left:927.6px;top:298.1px;width:0.7px;height:10.3px;background:#e5eaf0;"></div>
<div style="left:974.2px;top:298.1px;width:0.7px;height:10.3px;background:#e5eaf0;"></div>
<span style="top:298.5px;height:10px;line-height:10px;font-size:6.56px;color:#8f8f8f;left:940.6px;transform:scaleX(0.898);transform-origin:0 50%;width:36.7623px;overflow:hidden;">Instrumen...</span>
<span style="top:298.5px;height:10px;line-height:10px;font-size:6.56px;color:#2a2a9a;left:977.8px;transform:scaleX(0.885);transform-origin:0 50%;">218651</span>
<div style="left:927.6px;top:317.2px;width:105px;height:0.7px;background:#e5eaf0;"></div>
<div style="left:927.6px;top:307.4px;width:0.7px;height:10.3px;background:#e5eaf0;"></div>
<div style="left:974.2px;top:307.4px;width:0.7px;height:10.3px;background:#e5eaf0;"></div>
<span style="top:307.8px;height:10px;line-height:10px;font-size:6.56px;color:#8f8f8f;left:940.6px;transform:scaleX(0.898);transform-origin:0 50%;width:36.7623px;overflow:hidden;">User Com...</span>
<div style="left:927.6px;top:326.5px;width:105px;height:0.7px;background:#e5eaf0;"></div>
<div style="left:927.6px;top:316.7px;width:0.7px;height:10.3px;background:#e5eaf0;"></div>
<div style="left:974.2px;top:316.7px;width:0.7px;height:10.3px;background:#e5eaf0;"></div>
<span style="top:317.1px;height:10px;line-height:10px;font-size:6.56px;color:#8f8f8f;left:940.6px;transform:scaleX(0.898);transform-origin:0 50%;width:36.7623px;overflow:hidden;">Sample Po...</span>
<span style="top:317.1px;height:10px;line-height:10px;font-size:6.56px;color:#2a2a9a;left:977.8px;transform:scaleX(0.885);transform-origin:0 50%;">1A01</span>
<div style="left:927.6px;top:335.8px;width:105px;height:0.7px;background:#e5eaf0;"></div>
<div style="left:927.6px;top:326px;width:0.7px;height:10.3px;background:#e5eaf0;"></div>
<div style="left:974.2px;top:326px;width:0.7px;height:10.3px;background:#e5eaf0;"></div>
<span style="top:326.4px;height:10px;line-height:10px;font-size:6.56px;color:#8f8f8f;left:940.6px;transform:scaleX(0.898);transform-origin:0 50%;width:36.7623px;overflow:hidden;">Applicatio...</span>
<span style="top:326.4px;height:10px;line-height:10px;font-size:6.56px;color:#2a2a9a;left:977.8px;transform:scaleX(0.885);transform-origin:0 50%;">HighResolution</span>
<span style="top:336.1px;height:10px;line-height:10px;font-size:6.77px;color:#1a1a1a;font-weight:bold;left:929.8px;transform:scaleX(0.943);transform-origin:0 50%;">Meas. conditions</span>
<div style="left:917px;top:345.9px;width:115.6px;height:0.7px;background:#e5eaf0;"></div>
<div style="left:927.6px;top:355.2px;width:105px;height:0.7px;background:#e5eaf0;"></div>
<div style="left:927.6px;top:345.4px;width:0.7px;height:10.3px;background:#e5eaf0;"></div>
<div style="left:974.2px;top:345.4px;width:0.7px;height:10.3px;background:#e5eaf0;"></div>
<span style="top:345.8px;height:10px;line-height:10px;font-size:6.56px;color:#8f8f8f;left:940.6px;transform:scaleX(0.898);transform-origin:0 50%;width:36.7623px;overflow:hidden;">Scan Type</span>
<span style="top:345.8px;height:10px;line-height:10px;font-size:6.56px;color:#2a2a9a;left:977.8px;transform:scaleX(0.885);transform-origin:0 50%;">Rocking curve</span>
<div style="left:927.6px;top:364.4px;width:105px;height:0.7px;background:#e5eaf0;"></div>
<div style="left:927.6px;top:354.7px;width:0.7px;height:10.2px;background:#e5eaf0;"></div>
<div style="left:974.2px;top:354.7px;width:0.7px;height:10.2px;background:#e5eaf0;"></div>
<span style="top:355.05px;height:10px;line-height:10px;font-size:6.56px;color:#8f8f8f;left:940.6px;transform:scaleX(0.898);transform-origin:0 50%;width:36.7623px;overflow:hidden;">Scan Mode</span>
<span style="top:355.05px;height:10px;line-height:10px;font-size:6.56px;color:#2a2a9a;left:977.8px;transform:scaleX(0.885);transform-origin:0 50%;">Continuous</span>
<div style="left:927.6px;top:373.7px;width:105px;height:0.7px;background:#e5eaf0;"></div>
<div style="left:927.6px;top:363.9px;width:0.7px;height:10.3px;background:#e5eaf0;"></div>
<div style="left:974.2px;top:363.9px;width:0.7px;height:10.3px;background:#e5eaf0;"></div>
<span style="top:364.3px;height:10px;line-height:10px;font-size:6.56px;color:#8f8f8f;left:940.6px;transform:scaleX(0.898);transform-origin:0 50%;width:36.7623px;overflow:hidden;">Scan Status</span>
<span style="top:364.3px;height:10px;line-height:10px;font-size:6.56px;color:#2a2a9a;left:977.8px;transform:scaleX(0.885);transform-origin:0 50%;">Completed</span>
<div style="left:927.6px;top:383px;width:105px;height:0.7px;background:#e5eaf0;"></div>
<div style="left:927.6px;top:373.2px;width:0.7px;height:10.3px;background:#e5eaf0;"></div>
<div style="left:974.2px;top:373.2px;width:0.7px;height:10.3px;background:#e5eaf0;"></div>
<span style="top:373.6px;height:10px;line-height:10px;font-size:6.56px;color:#8f8f8f;left:940.6px;transform:scaleX(0.898);transform-origin:0 50%;width:36.7623px;overflow:hidden;">Start</span>
<span style="top:373.6px;height:10px;line-height:10px;font-size:6.56px;color:#2a2a9a;left:977.8px;transform:scaleX(0.885);transform-origin:0 50%;">15.016 °</span>
<div style="left:927.6px;top:392.3px;width:105px;height:0.7px;background:#e5eaf0;"></div>
<div style="left:927.6px;top:382.5px;width:0.7px;height:10.3px;background:#e5eaf0;"></div>
<div style="left:974.2px;top:382.5px;width:0.7px;height:10.3px;background:#e5eaf0;"></div>
<span style="top:382.9px;height:10px;line-height:10px;font-size:6.56px;color:#8f8f8f;left:940.6px;transform:scaleX(0.898);transform-origin:0 50%;width:36.7623px;overflow:hidden;">End</span>
<span style="top:382.9px;height:10px;line-height:10px;font-size:6.56px;color:#2a2a9a;left:977.8px;transform:scaleX(0.885);transform-origin:0 50%;">21.016 °</span>
<div style="left:927.6px;top:401.6px;width:105px;height:0.7px;background:#e5eaf0;"></div>
<div style="left:927.6px;top:391.8px;width:0.7px;height:10.3px;background:#e5eaf0;"></div>
<div style="left:974.2px;top:391.8px;width:0.7px;height:10.3px;background:#e5eaf0;"></div>
<span style="top:392.2px;height:10px;line-height:10px;font-size:6.56px;color:#8f8f8f;left:940.6px;transform:scaleX(0.898);transform-origin:0 50%;width:36.7623px;overflow:hidden;">Step Size</span>
<span style="top:392.2px;height:10px;line-height:10px;font-size:6.56px;color:#2a2a9a;left:977.8px;transform:scaleX(0.885);transform-origin:0 50%;">0.010 °</span>
<div style="left:927.6px;top:410.8px;width:105px;height:0.7px;background:#e5eaf0;"></div>
<div style="left:927.6px;top:401.1px;width:0.7px;height:10.2px;background:#e5eaf0;"></div>
<div style="left:974.2px;top:401.1px;width:0.7px;height:10.2px;background:#e5eaf0;"></div>
<span style="top:401.45px;height:10px;line-height:10px;font-size:6.56px;color:#8f8f8f;left:940.6px;transform:scaleX(0.898);transform-origin:0 50%;width:36.7623px;overflow:hidden;">Steps</span>
<span style="top:401.45px;height:10px;line-height:10px;font-size:6.56px;color:#2a2a9a;left:977.8px;transform:scaleX(0.885);transform-origin:0 50%;">601</span>
<div style="left:927.6px;top:420px;width:105px;height:0.7px;background:#e5eaf0;"></div>
<div style="left:927.6px;top:410.3px;width:0.7px;height:10.2px;background:#e5eaf0;"></div>
<div style="left:974.2px;top:410.3px;width:0.7px;height:10.2px;background:#e5eaf0;"></div>
<span style="top:410.65px;height:10px;line-height:10px;font-size:6.56px;color:#8f8f8f;left:940.6px;transform:scaleX(0.898);transform-origin:0 50%;width:36.7623px;overflow:hidden;">Total Time...</span>
<span style="top:410.65px;height:10px;line-height:10px;font-size:6.56px;color:#2a2a9a;left:977.8px;transform:scaleX(0.885);transform-origin:0 50%;">0.10 s</span>
<div style="left:927.6px;top:429.3px;width:105px;height:0.7px;background:#e5eaf0;"></div>
<div style="left:927.6px;top:419.5px;width:0.7px;height:10.3px;background:#e5eaf0;"></div>
<div style="left:974.2px;top:419.5px;width:0.7px;height:10.3px;background:#e5eaf0;"></div>
<span style="top:419.9px;height:10px;line-height:10px;font-size:6.56px;color:#8f8f8f;left:940.6px;transform:scaleX(0.898);transform-origin:0 50%;width:36.7623px;overflow:hidden;">Time/Step</span>
<span style="top:419.9px;height:10px;line-height:10px;font-size:6.56px;color:#2a2a9a;left:977.8px;transform:scaleX(0.885);transform-origin:0 50%;">0.10 s</span>
<div style="left:927.6px;top:438.6px;width:105px;height:0.7px;background:#e5eaf0;"></div>
<div style="left:927.6px;top:428.8px;width:0.7px;height:10.3px;background:#e5eaf0;"></div>
<div style="left:974.2px;top:428.8px;width:0.7px;height:10.3px;background:#e5eaf0;"></div>
<span style="top:429.2px;height:10px;line-height:10px;font-size:6.56px;color:#8f8f8f;left:940.6px;transform:scaleX(0.898);transform-origin:0 50%;width:36.7623px;overflow:hidden;">Time Start...</span>
<span style="top:429.2px;height:10px;line-height:10px;font-size:6.56px;color:#2a2a9a;left:977.8px;transform:scaleX(0.885);transform-origin:0 50%;">00:00:00</span>
<div style="left:927.6px;top:447.9px;width:105px;height:0.7px;background:#e5eaf0;"></div>
<div style="left:927.6px;top:438.1px;width:0.7px;height:10.3px;background:#e5eaf0;"></div>
<div style="left:974.2px;top:438.1px;width:0.7px;height:10.3px;background:#e5eaf0;"></div>
<span style="top:438.5px;height:10px;line-height:10px;font-size:6.56px;color:#8f8f8f;left:940.6px;transform:scaleX(0.898);transform-origin:0 50%;width:36.7623px;overflow:hidden;">Delay Time</span>
<span style="top:438.5px;height:10px;line-height:10px;font-size:6.56px;color:#2a2a9a;left:977.8px;transform:scaleX(0.885);transform-origin:0 50%;">0.0 s</span>
<div style="left:927.6px;top:457.2px;width:105px;height:0.7px;background:#e5eaf0;"></div>
<div style="left:927.6px;top:447.4px;width:0.7px;height:10.3px;background:#e5eaf0;"></div>
<div style="left:974.2px;top:447.4px;width:0.7px;height:10.3px;background:#e5eaf0;"></div>
<span style="top:447.8px;height:10px;line-height:10px;font-size:6.56px;color:#8f8f8f;left:940.6px;transform:scaleX(0.898);transform-origin:0 50%;width:36.7623px;overflow:hidden;">Axis Offset</span>
<span style="top:447.8px;height:10px;line-height:10px;font-size:6.56px;color:#2a2a9a;left:977.8px;transform:scaleX(0.885);transform-origin:0 50%;">-20.9888 °</span>
<div style="left:927.6px;top:466.5px;width:105px;height:0.7px;background:#e5eaf0;"></div>
<div style="left:927.6px;top:456.7px;width:0.7px;height:10.3px;background:#e5eaf0;"></div>
<div style="left:974.2px;top:456.7px;width:0.7px;height:10.3px;background:#e5eaf0;"></div>
<span style="top:457.1px;height:10px;line-height:10px;font-size:6.56px;color:#262626;font-weight:bold;left:940.6px;transform:scaleX(0.872);transform-origin:0 50%;width:37.8317px;overflow:hidden;">Goniomet...</span>
<span style="top:457.1px;height:10px;line-height:10px;font-size:6.67px;color:#262626;font-weight:bold;left:977.8px;transform:scaleX(0.952);transform-origin:0 50%;">407.5 mm</span>
<div style="left:927.6px;top:475.8px;width:105px;height:0.7px;background:#e5eaf0;"></div>
<div style="left:927.6px;top:466px;width:0.7px;height:10.3px;background:#e5eaf0;"></div>
<div style="left:974.2px;top:466px;width:0.7px;height:10.3px;background:#e5eaf0;"></div>
<span style="top:466.4px;height:10px;line-height:10px;font-size:6.56px;color:#8f8f8f;left:940.6px;transform:scaleX(0.898);transform-origin:0 50%;width:36.7623px;overflow:hidden;">Goniomet...</span>
<span style="top:466.4px;height:10px;line-height:10px;font-size:6.56px;color:#2a2a9a;left:977.8px;transform:scaleX(0.885);transform-origin:0 50%;">430.0 mm</span>
<div style="left:927.6px;top:485.1px;width:105px;height:0.7px;background:#e5eaf0;"></div>
<div style="left:927.6px;top:475.3px;width:0.7px;height:10.3px;background:#e5eaf0;"></div>
<div style="left:974.2px;top:475.3px;width:0.7px;height:10.3px;background:#e5eaf0;"></div>
<span style="top:475.7px;height:10px;line-height:10px;font-size:6.56px;color:#8f8f8f;left:940.6px;transform:scaleX(0.898);transform-origin:0 50%;width:36.7623px;overflow:hidden;">Goniomet...</span>
<span style="top:475.7px;height:10px;line-height:10px;font-size:6.56px;color:#2a2a9a;left:977.8px;transform:scaleX(0.885);transform-origin:0 50%;">385.0 mm</span>
<div style="left:927.6px;top:494.4px;width:105px;height:0.7px;background:#e5eaf0;"></div>
<div style="left:927.6px;top:484.6px;width:0.7px;height:10.3px;background:#e5eaf0;"></div>
<div style="left:974.2px;top:484.6px;width:0.7px;height:10.3px;background:#e5eaf0;"></div>
<span style="top:485px;height:10px;line-height:10px;font-size:6.56px;color:#8f8f8f;left:940.6px;transform:scaleX(0.898);transform-origin:0 50%;width:36.7623px;overflow:hidden;">Instructio...</span>
<span style="top:485px;height:10px;line-height:10px;font-size:6.56px;color:#2a2a9a;left:977.8px;transform:scaleX(0.885);transform-origin:0 50%;">0</span>
<div style="left:916.4px;top:498.4px;width:126.2px;height:5px;background:#eef1f5;"></div>
<div style="left:915.6px;top:504.4px;width:127px;height:38.2px;background:#fff;border:0.6px solid #c9d6e3;box-sizing:border-box;"></div>
<svg width="1047" height="567" viewBox="0 0 1047 567">
<defs><clipPath id="lp"><rect x="2" y="530" width="70" height="14.6"/></clipPath><clipPath id="cc"><rect x="122.8" y="103" width="784" height="176"/></clipPath></defs>
<path d="M122.3 103 V279.4 H906.6" fill="none" stroke="#222" stroke-width="0.95"/>
<path d="M120.2 279.00H122.3M121 277.05H122.3M121 275.09H122.3M121 273.13H122.3M121 271.18H122.3M120.2 269.23H122.3M121 267.27H122.3M121 265.31H122.3M121 263.36H122.3M121 261.40H122.3M117.8 259.45H122.3M121 257.50H122.3M121 255.54H122.3M121 253.59H122.3M121 251.63H122.3M120.2 249.68H122.3M121 247.72H122.3M121 245.76H122.3M121 243.81H122.3M121 241.85H122.3M117.8 239.90H122.3M121 237.94H122.3M121 235.99H122.3M121 234.03H122.3M121 232.08H122.3M120.2 230.12H122.3M121 228.17H122.3M121 226.22H122.3M121 224.26H122.3M121 222.31H122.3M117.8 220.35H122.3M121 218.39H122.3M121 216.44H122.3M121 214.49H122.3M121 212.53H122.3M120.2 210.57H122.3M121 208.62H122.3M121 206.66H122.3M121 204.71H122.3M121 202.75H122.3M117.8 200.80H122.3M121 198.84H122.3M121 196.89H122.3M121 194.94H122.3M121 192.98H122.3M120.2 191.02H122.3M121 189.07H122.3M121 187.12H122.3M121 185.16H122.3M121 183.20H122.3M117.8 181.25H122.3M121 179.29H122.3M121 177.34H122.3M121 175.38H122.3M121 173.43H122.3M120.2 171.47H122.3M121 169.52H122.3M121 167.56H122.3M121 165.61H122.3M121 163.65H122.3M117.8 161.70H122.3M121 159.75H122.3M121 157.79H122.3M121 155.83H122.3M121 153.88H122.3M120.2 151.93H122.3M121 149.97H122.3M121 148.01H122.3M121 146.06H122.3M121 144.10H122.3M117.8 142.15H122.3M121 140.19H122.3M121 138.24H122.3M121 136.28H122.3M121 134.33H122.3M120.2 132.38H122.3M121 130.42H122.3M121 128.46H122.3M121 126.51H122.3M121 124.55H122.3M117.8 122.60H122.3M121 120.64H122.3M121 118.69H122.3M121 116.73H122.3M121 114.78H122.3M120.2 112.82H122.3M121 110.87H122.3M121 108.91H122.3M121 106.96H122.3M121 105.00H122.3" stroke="#222" stroke-width="0.55"/>
<path d="M136.03 279.4V281.2M149.06 279.4V281.2M162.09 279.4V281.2M175.12 279.4V281.2M188.15 279.4V282.2M201.18 279.4V281.2M214.21 279.4V281.2M227.24 279.4V281.2M240.27 279.4V281.2M253.30 279.4V283M266.33 279.4V281.2M279.36 279.4V281.2M292.39 279.4V281.2M305.42 279.4V281.2M318.45 279.4V282.2M331.48 279.4V281.2M344.51 279.4V281.2M357.54 279.4V281.2M370.57 279.4V281.2M383.60 279.4V283M396.63 279.4V281.2M409.66 279.4V281.2M422.69 279.4V281.2M435.72 279.4V281.2M448.75 279.4V282.2M461.78 279.4V281.2M474.81 279.4V281.2M487.84 279.4V281.2M500.87 279.4V281.2M513.90 279.4V283M526.93 279.4V281.2M539.96 279.4V281.2M552.99 279.4V281.2M566.02 279.4V281.2M579.05 279.4V282.2M592.08 279.4V281.2M605.11 279.4V281.2M618.14 279.4V281.2M631.17 279.4V281.2M644.20 279.4V283M657.23 279.4V281.2M670.26 279.4V281.2M683.29 279.4V281.2M696.32 279.4V281.2M709.35 279.4V282.2M722.38 279.4V281.2M735.41 279.4V281.2M748.44 279.4V281.2M761.47 279.4V281.2M774.50 279.4V283M787.53 279.4V281.2M800.56 279.4V281.2M813.59 279.4V281.2M826.62 279.4V281.2M839.65 279.4V282.2M852.68 279.4V281.2M865.71 279.4V281.2M878.74 279.4V281.2M891.77 279.4V281.2M904.80 279.4V283" stroke="#222" stroke-width="0.6"/>
<text x="117.4" y="261.2" font-size="5.1" text-anchor="end" fill="#333">1,000</text>
<text x="117.4" y="241.7" font-size="5.1" text-anchor="end" fill="#333">2,000</text>
<text x="117.4" y="222.2" font-size="5.1" text-anchor="end" fill="#333">3,000</text>
<text x="117.4" y="202.6" font-size="5.1" text-anchor="end" fill="#333">4,000</text>
<text x="117.4" y="183.1" font-size="5.1" text-anchor="end" fill="#333">5,000</text>
<text x="117.4" y="163.5" font-size="5.1" text-anchor="end" fill="#333">6,000</text>
<text x="117.4" y="143.9" font-size="5.1" text-anchor="end" fill="#333">7,000</text>
<text x="117.4" y="124.4" font-size="5.1" text-anchor="end" fill="#333">8,000</text>
<text x="117.4" y="277.4" font-size="5.1" text-anchor="end" fill="#333">0</text>
<text x="253.3" y="288" font-size="5" text-anchor="middle" fill="#333">16</text>
<text x="383.6" y="288" font-size="5" text-anchor="middle" fill="#333">17</text>
<text x="513.9" y="288" font-size="5" text-anchor="middle" fill="#333">18</text>
<text x="644.2" y="288" font-size="5" text-anchor="middle" fill="#333">19</text>
<text x="774.5" y="288" font-size="5" text-anchor="middle" fill="#333">20</text>
<text x="906.8" y="288" font-size="5" text-anchor="end" fill="#333">21</text>
<text x="487" y="298.8" font-size="6.65" fill="#222">Theta WL=1.54060</text>
<text transform="translate(90.6 201.4) rotate(-90)" font-size="6.5" fill="#222">Counts</text>
<path d="M85.6 112 H122" stroke="#a5bbe0" stroke-width="1"/>
<path d="M374.8 280 V299.8" stroke="#7c9bd0" stroke-width="0.8"/>
<g clip-path="url(#cc)">
<polyline points="125.1,274.8 131.6,274.6 138.1,274.5 144.6,274.4 151.1,274.2 157.7,274.1 164.2,273.9 170.7,273.8 177.2,273.6 183.7,273.5 190.2,273.3 196.7,273.2 203.3,273.0 209.8,272.9 216.3,272.7 222.8,272.6 229.3,272.4 235.8,272.3 242.4,272.1 248.9,272.0 255.4,271.8 261.9,271.7 268.4,271.5 274.9,271.4 281.4,271.2 288.0,271.1 294.5,271.0 301.0,271.0 307.5,271.0 314.0,270.9 320.5,270.9 327.0,270.9 333.6,270.9 340.1,270.9 346.6,270.9 353.1,270.9 359.6,270.9 366.1,270.9 372.7,270.9 379.2,270.9 385.7,270.8 392.2,270.8 398.7,270.8 405.2,270.8 411.7,270.8 418.3,270.8 424.8,270.8 431.3,270.8 437.8,270.8 444.3,270.8 450.8,270.8 457.3,270.8 463.9,270.8 470.4,270.8 476.9,270.8 483.4,270.8 489.9,270.8 496.4,270.8 503.0,270.8 509.5,270.8 516.0,270.8 522.5,270.8 529.0,270.8 535.5,270.8 542.0,270.8 548.6,270.8 555.1,270.8 561.6,270.8 568.1,270.8 574.6,270.8 581.1,270.9 587.6,270.9 594.2,270.9 600.7,270.9 607.2,270.9 613.7,270.9 620.2,270.9 626.7,270.9 633.3,270.9 639.8,270.9 646.3,270.9 652.8,271.0 659.3,271.0 665.8,271.0 672.3,271.0 678.9,271.0 685.4,271.1 691.9,271.2 698.4,271.3 704.9,271.4 711.4,271.5 717.9,271.6 724.5,271.7 731.0,271.8 737.5,271.9 744.0,272.0 750.5,272.1 757.0,272.2 763.6,272.4 770.1,272.5 776.6,272.6 783.1,272.7 789.6,272.9 796.1,273.0 802.6,273.1 809.2,273.3 815.7,273.4 822.2,273.6 828.7,273.7 835.2,273.9 841.7,274.0 848.2,274.2 854.8,274.3 861.3,274.5 867.8,274.6 874.3,274.8 880.8,274.9 887.3,275.1 893.9,275.3 900.4,275.4 906.9,275.6" transform="translate(0 -0.35)" fill="none" stroke="#dc2c14" stroke-width="1.1" stroke-dasharray="1.7 1.57"/>
<polyline points="125.1,274.8 131.6,274.6 138.1,274.5 144.6,274.4 151.1,274.2 157.7,274.1 164.2,273.9 170.7,273.8 177.2,273.6 183.7,273.5 190.2,273.3 196.7,273.2 203.3,273.0 209.8,272.9 216.3,272.7 222.8,272.6 229.3,272.4 235.8,272.3 242.4,272.1 248.9,272.0 255.4,271.8 261.9,271.7 268.4,271.5 274.9,271.4 281.4,271.2 288.0,271.1 294.5,271.0 301.0,271.0 307.5,271.0 314.0,270.9 320.5,270.9 327.0,270.9 333.6,270.9 340.1,270.9 346.6,270.9 353.1,270.9 359.6,270.9 366.1,270.9 372.7,270.9 379.2,270.9 385.7,270.8 392.2,270.8 398.7,270.8 405.2,270.8 411.7,270.8 418.3,270.8 424.8,270.8 431.3,270.8 437.8,270.8 444.3,270.8 450.8,270.8 457.3,270.8 463.9,270.8 470.4,270.8 476.9,270.8 483.4,270.8 489.9,270.8 496.4,270.8 503.0,270.8 509.5,270.8 516.0,270.8 522.5,270.8 529.0,270.8 535.5,270.8 542.0,270.8 548.6,270.8 555.1,270.8 561.6,270.8 568.1,270.8 574.6,270.8 581.1,270.9 587.6,270.9 594.2,270.9 600.7,270.9 607.2,270.9 613.7,270.9 620.2,270.9 626.7,270.9 633.3,270.9 639.8,270.9 646.3,270.9 652.8,271.0 659.3,271.0 665.8,271.0 672.3,271.0 678.9,271.0 685.4,271.1 691.9,271.2 698.4,271.3 704.9,271.4 711.4,271.5 717.9,271.6 724.5,271.7 731.0,271.8 737.5,271.9 744.0,272.0 750.5,272.1 757.0,272.2 763.6,272.4 770.1,272.5 776.6,272.6 783.1,272.7 789.6,272.9 796.1,273.0 802.6,273.1 809.2,273.3 815.7,273.4 822.2,273.6 828.7,273.7 835.2,273.9 841.7,274.0 848.2,274.2 854.8,274.3 861.3,274.5 867.8,274.6 874.3,274.8 880.8,274.9 887.3,275.1 893.9,275.3 900.4,275.4 906.9,275.6" transform="translate(0 0.45)" fill="none" stroke="#2cae2c" stroke-width="1.0" stroke-dasharray="1.5 1.77" stroke-dashoffset="-1.3"/>
<polyline points="125.1,274.8 131.6,274.6 138.1,274.5 144.6,274.4 151.1,274.2 157.7,274.1 164.2,273.9 170.7,273.8 177.2,273.6 183.7,273.5 190.2,273.3 196.7,273.2 203.3,273.0 209.8,272.9 216.3,272.7 222.8,272.6 229.3,272.4 235.8,272.3 242.4,272.1 248.9,272.0 255.4,271.8 261.9,271.7 268.4,271.5 274.9,271.4 281.4,271.2 288.0,271.1 294.5,271.0 301.0,271.0 307.5,271.0 314.0,270.9 320.5,270.9 327.0,270.9 333.6,270.9 340.1,270.9 346.6,270.9 353.1,270.9 359.6,270.9 366.1,270.9 372.7,270.9 379.2,270.9 385.7,270.8 392.2,270.8 398.7,270.8 405.2,270.8 411.7,270.8 418.3,270.8 424.8,270.8 431.3,270.8 437.8,270.8 444.3,270.8 450.8,270.8 457.3,270.8 463.9,270.8 470.4,270.8 476.9,270.8 483.4,270.8 489.9,270.8 496.4,270.8 503.0,270.8 509.5,270.8 516.0,270.8 522.5,270.8 529.0,270.8 535.5,270.8 542.0,270.8 548.6,270.8 555.1,270.8 561.6,270.8 568.1,270.8 574.6,270.8 581.1,270.9 587.6,270.9 594.2,270.9 600.7,270.9 607.2,270.9 613.7,270.9 620.2,270.9 626.7,270.9 633.3,270.9 639.8,270.9 646.3,270.9 652.8,271.0 659.3,271.0 665.8,271.0 672.3,271.0 678.9,271.0 685.4,271.1 691.9,271.2 698.4,271.3 704.9,271.4 711.4,271.5 717.9,271.6 724.5,271.7 731.0,271.8 737.5,271.9 744.0,272.0 750.5,272.1 757.0,272.2 763.6,272.4 770.1,272.5 776.6,272.6 783.1,272.7 789.6,272.9 796.1,273.0 802.6,273.1 809.2,273.3 815.7,273.4 822.2,273.6 828.7,273.7 835.2,273.9 841.7,274.0 848.2,274.2 854.8,274.3 861.3,274.5 867.8,274.6 874.3,274.8 880.8,274.9 887.3,275.1 893.9,275.3 900.4,275.4 906.9,275.6" transform="translate(0 0.1)" fill="none" stroke="#7a3a10" stroke-width="0.7" stroke-opacity="0.45" stroke-dasharray="1.2 2.07" stroke-dashoffset="-0.9"/>
<polyline points="122.5,274.7 123.8,274.6 125.1,275.0 126.4,275.2 127.7,275.2 129.0,274.7 130.3,275.0 131.6,275.1 132.9,274.4 134.2,274.4 135.5,274.2 136.8,274.6 138.1,274.2 139.4,274.2 140.7,274.7 142.0,273.8 143.3,273.8 144.6,272.9 145.9,273.7 147.2,273.8 148.5,273.2 149.8,273.5 151.1,273.2 152.4,273.6 153.8,273.3 155.1,272.9 156.4,273.0 157.7,273.2 159.0,273.6 160.3,272.9 161.6,273.0 162.9,272.7 164.2,272.8 165.5,272.4 166.8,272.8 168.1,272.7 169.4,272.4 170.7,273.1 172.0,272.7 173.3,272.7 174.6,271.6 175.9,272.4 177.2,272.0 178.5,272.0 179.8,272.3 181.1,272.8 182.4,271.6 183.7,272.2 185.0,271.6 186.3,272.5 187.6,272.0 188.9,271.1 190.2,271.0 191.5,272.2 192.8,272.2 194.1,271.5 195.4,271.0 196.7,271.2 198.1,271.1 199.4,271.6 200.7,270.8 202.0,270.4 203.3,271.1 204.6,271.6 205.9,271.1 207.2,270.3 208.5,271.5 209.8,270.5 211.1,270.9 212.4,270.4 213.7,270.3 215.0,270.1 216.3,269.2 217.6,269.7 218.9,269.1 220.2,269.8 221.5,269.8 222.8,269.3 224.1,270.9 225.4,269.3 226.7,269.0 228.0,269.7 229.3,268.6 230.6,269.0 231.9,270.0 233.2,268.6 234.5,268.9 235.8,268.5 237.1,268.1 238.4,267.1 239.7,267.7 241.1,267.6 242.4,267.2 243.7,268.3 245.0,266.3 246.3,267.5 247.6,266.4 248.9,267.2 250.2,266.9 251.5,266.4 252.8,264.7 254.1,265.3 255.4,265.9 256.7,265.5 258.0,265.8 259.3,264.9 260.6,265.0 261.9,263.9 263.2,265.0 264.5,264.1 265.8,264.2 267.1,263.9 268.4,262.6 269.7,262.7 271.0,262.1 272.3,261.4 273.6,261.1 274.9,262.7 276.2,261.0 277.5,262.3 278.8,260.8 280.1,258.9 281.4,260.2 282.7,260.0 284.1,259.2 285.4,259.0 286.7,258.6 288.0,258.8 289.3,257.0 290.6,256.7 291.9,257.2 293.2,256.4 294.5,255.6 295.8,254.9 297.1,255.0 298.4,254.3 299.7,254.6 301.0,254.9 302.3,253.9 303.6,252.1 304.9,251.6 306.2,251.8 307.5,252.0 308.8,250.7 310.1,248.8 311.4,248.6 312.7,249.9 314.0,248.8 315.3,249.6 316.6,248.7 317.9,246.8 319.2,246.3 320.5,244.8 321.8,243.8 323.1,243.6 324.4,242.4 325.7,243.7 327.0,243.7 328.4,241.2 329.7,238.2 331.0,240.0 332.3,240.9 333.6,238.6 334.9,236.6 336.2,238.6 337.5,235.7 338.8,236.6 340.1,233.6 341.4,233.4 342.7,233.1 344.0,230.3 345.3,232.3 346.6,231.8 347.9,227.8 349.2,230.3 350.5,225.6 351.8,227.5 353.1,227.9 354.4,225.7 355.7,224.6 357.0,223.5 358.3,223.1 359.6,220.5 360.9,224.0 362.2,220.7 363.5,219.3 364.8,215.5 366.1,219.7 367.4,216.4 368.7,216.5 370.0,214.8 371.4,212.0 372.7,211.2 374.0,208.7 375.3,210.6 376.6,208.2 377.9,205.8 379.2,205.1 380.5,205.8 381.8,202.5 383.1,204.5 384.4,199.2 385.7,200.6 387.0,199.9 388.3,198.1 389.6,196.1 390.9,193.5 392.2,195.3 393.5,194.5 394.8,191.8 396.1,193.0 397.4,193.2 398.7,187.8 400.0,188.7 401.3,184.9 402.6,187.4 403.9,189.4 405.2,182.8 406.5,181.8 407.8,178.1 409.1,178.7 410.4,177.9 411.7,176.2 413.0,176.7 414.4,174.7 415.7,176.1 417.0,171.5 418.3,172.7 419.6,170.9 420.9,167.6 422.2,166.0 423.5,168.4 424.8,161.6 426.1,165.3 427.4,161.5 428.7,160.1 430.0,160.3 431.3,159.2 432.6,155.0 433.9,155.6 435.2,155.3 436.5,158.6 437.8,155.4 439.1,150.6 440.4,151.4 441.7,152.6 443.0,151.0 444.3,149.3 445.6,146.3 446.9,145.8 448.2,143.6 449.5,146.3 450.8,141.7 452.1,143.7 453.4,142.4 454.7,137.3 456.0,139.8 457.3,139.3 458.7,138.6 460.0,138.1 461.3,133.3 462.6,132.8 463.9,133.4 465.2,133.8 466.5,131.2 467.8,132.8 469.1,131.0 470.4,130.4 471.7,130.5 473.0,126.5 474.3,125.7 475.6,126.0 476.9,132.4 478.2,123.8 479.5,125.7 480.8,127.7 482.1,126.3 483.4,123.4 484.7,122.9 486.0,123.2 487.3,124.4 488.6,124.4 489.9,122.3 491.2,124.1 492.5,125.6 493.8,124.8 495.1,123.6 496.4,122.4 497.7,118.1 499.0,125.9 500.3,121.8 501.7,123.1 503.0,122.2 504.3,120.0 505.6,120.3 506.9,123.5 508.2,124.5 509.5,126.4 510.8,123.8 512.1,121.2 513.4,124.8 514.7,123.1 516.0,123.4 517.3,124.5 518.6,123.5 519.9,126.5 521.2,128.6 522.5,129.9 523.8,125.9 525.1,129.3 526.4,129.8 527.7,128.1 529.0,132.2 530.3,127.5 531.6,130.6 532.9,133.9 534.2,135.0 535.5,132.2 536.8,137.8 538.1,137.6 539.4,137.1 540.7,137.6 542.0,139.0 543.3,139.2 544.7,141.7 546.0,142.3 547.3,140.5 548.6,142.8 549.9,146.1 551.2,142.8 552.5,151.4 553.8,148.3 555.1,148.3 556.4,148.8 557.7,151.7 559.0,153.8 560.3,153.1 561.6,155.8 562.9,155.7 564.2,163.3 565.5,158.3 566.8,161.8 568.1,159.7 569.4,161.3 570.7,162.6 572.0,166.0 573.3,165.6 574.6,168.3 575.9,168.5 577.2,170.4 578.5,173.0 579.8,169.1 581.1,172.7 582.4,178.9 583.7,174.9 585.0,180.2 586.3,179.4 587.6,181.2 589.0,182.4 590.3,182.3 591.6,184.5 592.9,187.6 594.2,186.4 595.5,187.0 596.8,185.9 598.1,190.7 599.4,193.2 600.7,193.1 602.0,192.6 603.3,196.3 604.6,197.2 605.9,196.3 607.2,198.4 608.5,199.2 609.8,201.6 611.1,203.1 612.4,203.4 613.7,204.3 615.0,205.7 616.3,205.6 617.6,206.6 618.9,207.6 620.2,208.8 621.5,211.9 622.8,213.2 624.1,211.5 625.4,213.7 626.7,214.6 628.0,217.4 629.3,217.0 630.6,218.6 632.0,219.9 633.3,220.5 634.6,222.6 635.9,221.4 637.2,220.9 638.5,224.3 639.8,224.2 641.1,226.6 642.4,225.2 643.7,224.6 645.0,229.3 646.3,228.9 647.6,227.7 648.9,229.9 650.2,231.0 651.5,234.4 652.8,232.9 654.1,232.4 655.4,232.6 656.7,234.2 658.0,236.4 659.3,237.2 660.6,239.2 661.9,239.1 663.2,237.3 664.5,239.4 665.8,241.4 667.1,239.1 668.4,243.0 669.7,240.5 671.0,242.8 672.3,242.7 673.6,243.0 675.0,244.0 676.3,243.6 677.6,245.4 678.9,246.3 680.2,247.2 681.5,248.5 682.8,248.3 684.1,247.2 685.4,247.8 686.7,247.8 688.0,247.0 689.3,249.4 690.6,250.1 691.9,252.2 693.2,251.7 694.5,249.9 695.8,251.8 697.1,252.9 698.4,252.9 699.7,255.2 701.0,254.7 702.3,255.5 703.6,256.6 704.9,254.4 706.2,254.6 707.5,256.0 708.8,255.9 710.1,257.3 711.4,256.5 712.7,256.5 714.0,256.2 715.3,256.5 716.6,257.7 717.9,258.5 719.3,259.3 720.6,259.5 721.9,258.8 723.2,259.1 724.5,259.9 725.8,259.0 727.1,260.1 728.4,261.0 729.7,261.5 731.0,261.6 732.3,262.7 733.6,263.0 734.9,262.4 736.2,263.3 737.5,263.4 738.8,262.7 740.1,263.9 741.4,263.2 742.7,264.3 744.0,263.6 745.3,264.5 746.6,266.2 747.9,264.5 749.2,265.7 750.5,267.1 751.8,266.0 753.1,266.1 754.4,267.3 755.7,267.0 757.0,266.5 758.3,266.2 759.6,266.6 760.9,266.7 762.3,267.0 763.6,269.3 764.9,268.4 766.2,268.0 767.5,269.9 768.8,268.0 770.1,268.1 771.4,269.2 772.7,269.2 774.0,269.6 775.3,269.3 776.6,269.4 777.9,269.5 779.2,270.2 780.5,269.6 781.8,270.1 783.1,269.5 784.4,270.0 785.7,271.1 787.0,271.1 788.3,270.5 789.6,270.9 790.9,270.5 792.2,270.5 793.5,271.0 794.8,271.9 796.1,271.8 797.4,271.0 798.7,271.9 800.0,270.9 801.3,271.6 802.6,271.4 803.9,272.2 805.3,271.9 806.6,273.3 807.9,272.1 809.2,271.8 810.5,272.6 811.8,272.6 813.1,272.4 814.4,272.4 815.7,272.9 817.0,272.3 818.3,273.4 819.6,272.2 820.9,273.4 822.2,273.2 823.5,272.4 824.8,273.4 826.1,273.8 827.4,273.1 828.7,273.6 830.0,273.7 831.3,273.6 832.6,273.7 833.9,273.9 835.2,273.9 836.5,272.9 837.8,273.9 839.1,273.3 840.4,274.3 841.7,273.6 843.0,274.4 844.3,274.1 845.6,273.7 846.9,274.2 848.2,274.8 849.6,274.3 850.9,274.2 852.2,274.0 853.5,274.7 854.8,274.4 856.1,274.4 857.4,275.0 858.7,274.5 860.0,274.8 861.3,274.4 862.6,274.6 863.9,274.7 865.2,275.6 866.5,274.8 867.8,274.9 869.1,275.2 870.4,275.0 871.7,275.4 873.0,274.9 874.3,274.8 875.6,274.8 876.9,275.2 878.2,274.5 879.5,274.8 880.8,275.5 882.1,275.3 883.4,275.8 884.7,275.3 886.0,275.1 887.3,274.9 888.6,275.5 889.9,276.0 891.2,275.5 892.6,275.1 893.9,275.5 895.2,275.1 896.5,275.2 897.8,275.0 899.1,275.3 900.4,275.7 901.7,275.4 903.0,274.7 904.3,275.7 905.6,276.1 906.9,274.8" fill="none" stroke="#ff1818" stroke-width="0.82" stroke-opacity="1" stroke-linejoin="round"/>
<polyline points="122.5,274.2 123.8,275.1 125.1,274.7 126.4,274.7 127.7,274.3 129.0,275.1 130.3,274.6 131.6,274.7 132.9,274.7 134.2,274.6 135.5,274.4 136.8,274.2 138.1,274.4 139.4,273.8 140.7,274.1 142.0,275.1 143.3,273.3 144.6,273.9 145.9,274.0 147.2,273.5 148.5,273.5 149.8,273.5 151.1,273.8 152.4,273.3 153.8,274.0 155.1,272.7 156.4,273.7 157.7,273.2 159.0,273.1 160.3,272.9 161.6,273.1 162.9,272.7 164.2,274.4 165.5,272.9 166.8,272.9 168.1,273.0 169.4,272.1 170.7,273.1 172.0,272.7 173.3,273.5 174.6,272.4 175.9,273.2 177.2,273.1 178.5,271.3 179.8,272.0 181.1,272.3 182.4,272.2 183.7,272.9 185.0,272.6 186.3,271.9 187.6,273.0 188.9,271.9 190.2,272.8 191.5,271.8 192.8,272.4 194.1,270.9 195.4,271.2 196.7,271.9 198.1,272.5 199.4,272.0 200.7,271.5 202.0,272.0 203.3,271.3 204.6,270.9 205.9,271.3 207.2,271.5 208.5,270.8 209.8,271.3 211.1,270.6 212.4,271.2 213.7,270.1 215.0,271.0 216.3,271.4 217.6,270.7 218.9,271.0 220.2,271.1 221.5,270.6 222.8,270.1 224.1,271.5 225.4,270.4 226.7,270.3 228.0,270.3 229.3,269.7 230.6,270.7 231.9,269.6 233.2,270.0 234.5,269.7 235.8,269.8 237.1,269.8 238.4,269.8 239.7,269.2 241.1,268.2 242.4,268.6 243.7,268.6 245.0,268.7 246.3,269.2 247.6,268.5 248.9,267.5 250.2,269.3 251.5,268.0 252.8,267.8 254.1,268.1 255.4,267.6 256.7,267.1 258.0,266.5 259.3,266.9 260.6,266.6 261.9,267.2 263.2,266.8 264.5,267.0 265.8,266.8 267.1,267.1 268.4,266.2 269.7,265.5 271.0,266.4 272.3,265.9 273.6,265.5 274.9,265.7 276.2,264.9 277.5,265.2 278.8,265.9 280.1,265.6 281.4,264.3 282.7,264.1 284.1,263.6 285.4,263.9 286.7,263.7 288.0,264.7 289.3,262.4 290.6,263.8 291.9,262.1 293.2,263.4 294.5,262.8 295.8,261.9 297.1,262.1 298.4,262.0 299.7,260.5 301.0,260.4 302.3,260.3 303.6,260.5 304.9,260.5 306.2,259.9 307.5,259.6 308.8,258.9 310.1,257.9 311.4,258.3 312.7,258.4 314.0,257.9 315.3,255.9 316.6,256.5 317.9,256.0 319.2,255.5 320.5,254.8 321.8,254.8 323.1,253.4 324.4,253.3 325.7,256.0 327.0,253.2 328.4,249.9 329.7,253.2 331.0,251.4 332.3,250.0 333.6,250.5 334.9,248.7 336.2,250.6 337.5,250.1 338.8,248.5 340.1,248.5 341.4,248.2 342.7,246.0 344.0,245.6 345.3,245.3 346.6,245.1 347.9,243.7 349.2,243.5 350.5,243.5 351.8,241.5 353.1,240.9 354.4,240.5 355.7,239.1 357.0,240.4 358.3,238.6 359.6,238.3 360.9,235.4 362.2,235.5 363.5,232.9 364.8,232.7 366.1,234.2 367.4,234.2 368.7,231.5 370.0,231.6 371.4,230.6 372.7,230.8 374.0,227.9 375.3,227.5 376.6,226.3 377.9,225.5 379.2,226.1 380.5,226.9 381.8,223.4 383.1,223.0 384.4,221.8 385.7,218.9 387.0,219.3 388.3,216.1 389.6,216.9 390.9,215.2 392.2,214.4 393.5,212.9 394.8,214.8 396.1,210.3 397.4,210.7 398.7,211.2 400.0,207.7 401.3,207.0 402.6,204.5 403.9,204.2 405.2,203.6 406.5,205.5 407.8,199.3 409.1,198.4 410.4,198.4 411.7,197.7 413.0,195.3 414.4,197.4 415.7,193.7 417.0,193.6 418.3,194.1 419.6,190.7 420.9,189.5 422.2,186.0 423.5,186.0 424.8,189.1 426.1,188.5 427.4,184.1 428.7,183.1 430.0,183.1 431.3,182.8 432.6,179.4 433.9,179.8 435.2,177.8 436.5,173.8 437.8,173.7 439.1,174.2 440.4,173.7 441.7,170.8 443.0,166.0 444.3,168.9 445.6,163.6 446.9,167.0 448.2,164.7 449.5,161.8 450.8,163.4 452.1,160.7 453.4,162.2 454.7,157.1 456.0,155.0 457.3,157.3 458.7,154.6 460.0,154.6 461.3,156.9 462.6,146.1 463.9,149.2 465.2,147.7 466.5,147.5 467.8,146.9 469.1,141.4 470.4,148.8 471.7,144.8 473.0,144.0 474.3,142.6 475.6,139.7 476.9,141.7 478.2,142.0 479.5,140.7 480.8,136.5 482.1,134.6 483.4,134.1 484.7,131.6 486.0,135.2 487.3,131.3 488.6,131.1 489.9,132.2 491.2,132.8 492.5,128.6 493.8,131.3 495.1,129.8 496.4,130.7 497.7,124.2 499.0,127.6 500.3,128.0 501.7,127.0 503.0,126.5 504.3,125.3 505.6,128.8 506.9,127.3 508.2,123.3 509.5,121.7 510.8,126.0 512.1,123.3 513.4,124.6 514.7,128.1 516.0,123.7 517.3,125.2 518.6,120.9 519.9,123.2 521.2,122.8 522.5,125.9 523.8,122.4 525.1,127.1 526.4,122.5 527.7,120.1 529.0,125.9 530.3,121.7 531.6,120.7 532.9,124.5 534.2,122.0 535.5,124.6 536.8,126.3 538.1,130.0 539.4,128.5 540.7,129.8 542.0,122.1 543.3,127.2 544.7,128.7 546.0,131.9 547.3,126.0 548.6,132.9 549.9,128.0 551.2,129.6 552.5,132.5 553.8,134.9 555.1,134.4 556.4,138.0 557.7,134.7 559.0,133.5 560.3,136.1 561.6,136.7 562.9,141.3 564.2,140.2 565.5,144.0 566.8,143.8 568.1,142.5 569.4,140.0 570.7,146.0 572.0,147.1 573.3,152.1 574.6,149.1 575.9,152.4 577.2,154.5 578.5,155.9 579.8,153.8 581.1,156.1 582.4,155.2 583.7,158.2 585.0,158.9 586.3,157.3 587.6,159.8 589.0,161.1 590.3,161.1 591.6,164.7 592.9,168.2 594.2,169.0 595.5,171.7 596.8,169.4 598.1,172.1 599.4,171.7 600.7,172.3 602.0,176.5 603.3,176.0 604.6,175.4 605.9,178.7 607.2,178.5 608.5,181.7 609.8,184.2 611.1,184.2 612.4,188.3 613.7,185.1 615.0,188.4 616.3,186.5 617.6,192.0 618.9,191.0 620.2,191.8 621.5,193.9 622.8,194.1 624.1,197.2 625.4,198.8 626.7,200.5 628.0,200.3 629.3,201.9 630.6,201.4 632.0,203.4 633.3,205.0 634.6,206.2 635.9,209.1 637.2,207.8 638.5,207.8 639.8,211.4 641.1,210.9 642.4,210.6 643.7,213.6 645.0,213.4 646.3,215.3 647.6,212.2 648.9,214.7 650.2,216.0 651.5,219.6 652.8,218.7 654.1,220.8 655.4,221.0 656.7,223.2 658.0,223.1 659.3,225.3 660.6,224.8 661.9,223.8 663.2,228.7 664.5,229.4 665.8,228.0 667.1,228.5 668.4,230.7 669.7,230.4 671.0,231.4 672.3,232.0 673.6,231.8 675.0,235.0 676.3,234.2 677.6,235.5 678.9,237.2 680.2,236.6 681.5,239.3 682.8,240.2 684.1,238.0 685.4,241.1 686.7,238.7 688.0,240.0 689.3,242.4 690.6,243.4 691.9,245.4 693.2,243.7 694.5,246.0 695.8,243.2 697.1,247.1 698.4,245.9 699.7,249.3 701.0,247.4 702.3,246.3 703.6,248.5 704.9,249.4 706.2,249.6 707.5,249.2 708.8,249.2 710.1,250.8 711.4,252.9 712.7,251.2 714.0,251.0 715.3,250.2 716.6,252.6 717.9,253.0 719.3,254.0 720.6,253.3 721.9,252.8 723.2,255.6 724.5,255.0 725.8,256.4 727.1,256.4 728.4,256.3 729.7,256.1 731.0,257.5 732.3,257.4 733.6,256.4 734.9,257.4 736.2,257.5 737.5,258.1 738.8,258.9 740.1,258.6 741.4,258.8 742.7,259.5 744.0,259.1 745.3,260.2 746.6,259.9 747.9,261.0 749.2,260.8 750.5,262.2 751.8,262.4 753.1,263.2 754.4,261.8 755.7,262.6 757.0,263.1 758.3,263.1 759.6,264.4 760.9,264.0 762.3,264.7 763.6,265.9 764.9,265.0 766.2,265.7 767.5,264.4 768.8,266.1 770.1,266.2 771.4,265.4 772.7,266.3 774.0,267.3 775.3,266.5 776.6,267.3 777.9,266.0 779.2,267.9 780.5,267.9 781.8,269.3 783.1,268.2 784.4,266.9 785.7,268.2 787.0,268.9 788.3,268.3 789.6,268.8 790.9,268.8 792.2,267.5 793.5,268.0 794.8,268.4 796.1,268.5 797.4,270.0 798.7,270.7 800.0,269.4 801.3,269.7 802.6,270.0 803.9,270.2 805.3,269.9 806.6,270.1 807.9,270.4 809.2,270.4 810.5,270.9 811.8,271.1 813.1,270.3 814.4,271.2 815.7,270.2 817.0,271.0 818.3,271.4 819.6,270.9 820.9,271.8 822.2,271.8 823.5,271.9 824.8,271.9 826.1,271.6 827.4,271.0 828.7,271.9 830.0,272.7 831.3,272.7 832.6,273.2 833.9,272.1 835.2,272.1 836.5,272.4 837.8,272.5 839.1,272.5 840.4,272.6 841.7,272.6 843.0,272.8 844.3,273.4 845.6,272.7 846.9,272.6 848.2,273.9 849.6,273.4 850.9,273.8 852.2,273.2 853.5,273.6 854.8,272.9 856.1,273.1 857.4,273.8 858.7,273.9 860.0,274.0 861.3,273.6 862.6,274.3 863.9,273.8 865.2,274.5 866.5,273.6 867.8,273.9 869.1,274.6 870.4,274.5 871.7,274.2 873.0,274.2 874.3,275.4 875.6,274.3 876.9,273.9 878.2,274.7 879.5,275.0 880.8,274.1 882.1,274.5 883.4,274.6 884.7,274.5 886.0,275.2 887.3,275.0 888.6,275.3 889.9,275.3 891.2,275.0 892.6,275.3 893.9,274.4 895.2,274.9 896.5,274.8 897.8,275.7 899.1,275.2 900.4,275.3 901.7,275.2 903.0,275.1 904.3,275.6 905.6,275.7 906.9,275.1" fill="none" stroke="#1ee01e" stroke-width="0.85" stroke-opacity="1" stroke-linejoin="round"/>
<polyline points="122.5,275.0 123.8,274.5 125.1,275.1 126.4,274.4 127.7,274.7 129.0,274.7 130.3,273.8 131.6,274.4 132.9,274.4 134.2,274.0 135.5,273.8 136.8,274.1 138.1,273.8 139.4,274.4 140.7,274.1 142.0,274.0 143.3,274.3 144.6,274.3 145.9,274.3 147.2,273.7 148.5,273.6 149.8,273.6 151.1,273.4 152.4,273.9 153.8,273.3 155.1,273.2 156.4,272.9 157.7,273.5 159.0,273.3 160.3,273.9 161.6,273.2 162.9,273.9 164.2,273.5 165.5,272.3 166.8,273.7 168.1,272.4 169.4,272.5 170.7,272.8 172.0,272.4 173.3,272.3 174.6,272.0 175.9,272.5 177.2,272.6 178.5,272.6 179.8,272.7 181.1,272.2 182.4,272.5 183.7,271.6 185.0,272.9 186.3,272.5 187.6,272.4 188.9,272.9 190.2,271.0 191.5,273.0 192.8,271.9 194.1,272.0 195.4,270.9 196.7,272.6 198.1,271.1 199.4,271.9 200.7,271.5 202.0,271.7 203.3,271.0 204.6,271.8 205.9,271.3 207.2,271.0 208.5,270.2 209.8,272.2 211.1,270.2 212.4,270.5 213.7,271.1 215.0,270.7 216.3,271.0 217.6,269.9 218.9,270.5 220.2,270.7 221.5,270.6 222.8,270.5 224.1,270.4 225.4,270.7 226.7,269.1 228.0,271.1 229.3,271.9 230.6,270.0 231.9,270.0 233.2,269.6 234.5,269.8 235.8,269.7 237.1,269.4 238.4,268.9 239.7,269.6 241.1,269.5 242.4,268.1 243.7,268.8 245.0,269.5 246.3,267.6 247.6,268.3 248.9,269.0 250.2,269.2 251.5,268.2 252.8,268.8 254.1,268.8 255.4,268.8 256.7,268.2 258.0,267.1 259.3,267.9 260.6,268.4 261.9,267.0 263.2,267.2 264.5,266.6 265.8,266.2 267.1,266.9 268.4,266.7 269.7,266.4 271.0,267.0 272.3,265.7 273.6,265.0 274.9,265.6 276.2,265.7 277.5,265.5 278.8,265.6 280.1,265.4 281.4,265.0 282.7,265.1 284.1,264.6 285.4,265.1 286.7,263.6 288.0,263.5 289.3,264.1 290.6,264.7 291.9,262.8 293.2,261.8 294.5,262.8 295.8,262.4 297.1,262.1 298.4,261.0 299.7,261.8 301.0,260.1 302.3,260.8 303.6,259.5 304.9,259.9 306.2,259.7 307.5,260.4 308.8,259.4 310.1,258.7 311.4,257.6 312.7,257.6 314.0,257.9 315.3,256.6 316.6,255.8 317.9,256.3 319.2,256.1 320.5,255.7 321.8,254.2 323.1,254.0 324.4,254.8 325.7,253.2 327.0,253.5 328.4,253.2 329.7,250.9 331.0,250.8 332.3,251.7 333.6,250.4 334.9,249.5 336.2,250.0 337.5,249.0 338.8,247.7 340.1,249.5 341.4,246.8 342.7,245.8 344.0,245.4 345.3,246.7 346.6,244.3 347.9,244.9 349.2,242.8 350.5,242.0 351.8,241.8 353.1,242.1 354.4,241.2 355.7,239.0 357.0,240.2 358.3,237.9 359.6,237.1 360.9,237.2 362.2,233.4 363.5,235.3 364.8,232.0 366.1,236.1 367.4,235.6 368.7,230.9 370.0,230.5 371.4,230.7 372.7,229.6 374.0,231.0 375.3,228.5 376.6,228.1 377.9,226.2 379.2,223.8 380.5,224.0 381.8,222.6 383.1,223.0 384.4,221.7 385.7,220.0 387.0,219.5 388.3,216.4 389.6,218.3 390.9,213.5 392.2,216.4 393.5,212.5 394.8,214.1 396.1,209.5 397.4,210.6 398.7,209.2 400.0,207.5 401.3,208.5 402.6,208.0 403.9,208.3 405.2,202.3 406.5,204.1 407.8,202.8 409.1,200.8 410.4,196.5 411.7,201.1 413.0,196.8 414.4,196.7 415.7,194.0 417.0,196.6 418.3,193.1 419.6,189.9 420.9,187.5 422.2,186.2 423.5,189.1 424.8,186.3 426.1,185.4 427.4,186.3 428.7,185.2 430.0,180.2 431.3,179.8 432.6,179.3 433.9,175.7 435.2,178.3 436.5,174.4 437.8,174.1 439.1,173.0 440.4,170.8 441.7,170.1 443.0,168.7 444.3,167.5 445.6,163.2 446.9,166.1 448.2,162.4 449.5,162.0 450.8,162.6 452.1,159.2 453.4,161.2 454.7,156.2 456.0,158.8 457.3,157.0 458.7,154.3 460.0,152.2 461.3,150.9 462.6,149.8 463.9,150.9 465.2,151.3 466.5,147.2 467.8,146.6 469.1,148.1 470.4,143.2 471.7,143.7 473.0,145.1 474.3,141.2 475.6,143.9 476.9,142.0 478.2,138.5 479.5,141.6 480.8,137.4 482.1,139.4 483.4,134.2 484.7,136.5 486.0,133.8 487.3,136.5 488.6,133.3 489.9,129.9 491.2,130.2 492.5,134.4 493.8,127.8 495.1,127.3 496.4,129.4 497.7,125.0 499.0,129.7 500.3,127.1 501.7,124.0 503.0,123.1 504.3,122.8 505.6,127.5 506.9,128.6 508.2,123.6 509.5,127.2 510.8,124.1 512.1,126.3 513.4,121.0 514.7,121.4 516.0,121.8 517.3,122.8 518.6,122.7 519.9,123.4 521.2,121.9 522.5,122.1 523.8,121.7 525.1,123.8 526.4,118.8 527.7,122.5 529.0,120.2 530.3,120.6 531.6,125.7 532.9,127.7 534.2,121.7 535.5,125.6 536.8,125.0 538.1,126.2 539.4,125.8 540.7,129.2 542.0,127.4 543.3,128.8 544.7,128.4 546.0,134.0 547.3,127.9 548.6,129.7 549.9,134.8 551.2,133.4 552.5,132.6 553.8,132.1 555.1,134.3 556.4,132.3 557.7,136.0 559.0,139.1 560.3,139.3 561.6,137.3 562.9,141.1 564.2,139.1 565.5,139.8 566.8,141.7 568.1,141.9 569.4,145.4 570.7,146.1 572.0,148.4 573.3,149.6 574.6,152.6 575.9,151.7 577.2,153.9 578.5,155.7 579.8,153.8 581.1,154.4 582.4,157.2 583.7,155.1 585.0,157.1 586.3,158.1 587.6,162.5 589.0,165.4 590.3,162.8 591.6,164.5 592.9,165.0 594.2,166.8 595.5,166.5 596.8,170.6 598.1,170.1 599.4,174.2 600.7,178.0 602.0,175.9 603.3,173.7 604.6,180.6 605.9,177.1 607.2,181.3 608.5,182.0 609.8,182.5 611.1,183.5 612.4,186.7 613.7,186.1 615.0,186.8 616.3,187.4 617.6,191.2 618.9,188.6 620.2,189.3 621.5,189.7 622.8,196.9 624.1,195.7 625.4,200.1 626.7,197.7 628.0,198.6 629.3,202.4 630.6,204.2 632.0,202.6 633.3,203.0 634.6,206.3 635.9,206.6 637.2,211.0 638.5,209.4 639.8,209.2 641.1,210.3 642.4,209.3 643.7,214.2 645.0,216.8 646.3,214.0 647.6,216.5 648.9,216.3 650.2,216.7 651.5,217.8 652.8,217.7 654.1,218.8 655.4,223.7 656.7,222.5 658.0,220.7 659.3,224.8 660.6,223.9 661.9,226.1 663.2,227.4 664.5,225.8 665.8,227.3 667.1,229.7 668.4,229.2 669.7,232.7 671.0,232.7 672.3,231.6 673.6,233.4 675.0,235.4 676.3,234.4 677.6,235.3 678.9,234.9 680.2,236.0 681.5,238.1 682.8,239.1 684.1,239.4 685.4,240.1 686.7,239.0 688.0,239.5 689.3,240.4 690.6,242.0 691.9,243.3 693.2,242.7 694.5,244.6 695.8,244.6 697.1,247.1 698.4,246.4 699.7,245.1 701.0,248.1 702.3,249.0 703.6,248.2 704.9,247.0 706.2,247.7 707.5,249.9 708.8,250.5 710.1,250.6 711.4,251.9 712.7,251.4 714.0,252.2 715.3,253.6 716.6,253.3 717.9,253.4 719.3,254.3 720.6,254.9 721.9,253.6 723.2,253.1 724.5,255.3 725.8,255.8 727.1,255.4 728.4,256.4 729.7,257.2 731.0,255.7 732.3,258.0 733.6,258.1 734.9,258.3 736.2,258.8 737.5,258.6 738.8,258.2 740.1,257.9 741.4,258.7 742.7,259.5 744.0,260.8 745.3,260.3 746.6,261.3 747.9,261.0 749.2,260.6 750.5,261.5 751.8,262.1 753.1,262.8 754.4,262.6 755.7,262.8 757.0,263.9 758.3,263.9 759.6,263.2 760.9,265.2 762.3,264.6 763.6,265.4 764.9,263.8 766.2,264.7 767.5,265.0 768.8,265.3 770.1,265.6 771.4,265.9 772.7,267.2 774.0,266.3 775.3,266.3 776.6,267.7 777.9,266.6 779.2,266.9 780.5,268.4 781.8,267.9 783.1,268.0 784.4,268.3 785.7,267.9 787.0,269.1 788.3,268.6 789.6,268.5 790.9,268.4 792.2,268.9 793.5,269.2 794.8,268.9 796.1,270.5 797.4,269.0 798.7,269.8 800.0,270.5 801.3,270.2 802.6,271.0 803.9,271.2 805.3,270.5 806.6,270.8 807.9,270.2 809.2,271.1 810.5,271.4 811.8,271.3 813.1,270.1 814.4,271.1 815.7,271.5 817.0,271.8 818.3,271.9 819.6,271.6 820.9,271.4 822.2,271.1 823.5,271.2 824.8,271.7 826.1,272.2 827.4,272.4 828.7,273.2 830.0,272.7 831.3,272.1 832.6,272.5 833.9,272.3 835.2,273.1 836.5,272.2 837.8,272.5 839.1,272.7 840.4,272.6 841.7,273.8 843.0,273.2 844.3,273.4 845.6,272.3 846.9,273.2 848.2,273.4 849.6,272.9 850.9,273.8 852.2,272.8 853.5,273.8 854.8,273.6 856.1,274.0 857.4,273.3 858.7,274.6 860.0,273.5 861.3,274.1 862.6,273.9 863.9,274.4 865.2,273.9 866.5,274.0 867.8,273.9 869.1,274.0 870.4,274.0 871.7,273.9 873.0,274.4 874.3,274.8 875.6,274.9 876.9,274.2 878.2,274.6 879.5,274.1 880.8,274.6 882.1,275.0 883.4,274.3 884.7,274.0 886.0,274.8 887.3,275.1 888.6,275.1 889.9,274.6 891.2,275.1 892.6,275.1 893.9,274.8 895.2,275.0 896.5,275.0 897.8,275.3 899.1,275.4 900.4,275.1 901.7,275.2 903.0,275.1 904.3,275.5 905.6,275.2 906.9,275.2" fill="none" stroke="#801212" stroke-width="0.72" stroke-opacity="1" stroke-linejoin="round"/>
</g>
<path d="M996.6 6.5 h3.8" stroke="#dbe6f2" stroke-width="0.7"/>
<path d="M1016.6 5.6 h2.7 v2.7 h-2.7z M1017.6 5.4 v-0.9 h2.7 v2.7 h-0.9" fill="none" stroke="#dbe6f2" stroke-width="0.6"/>
<path d="M1035.8 4.6 l3.6 3.6 m0 -3.6 l-3.6 3.6" stroke="#eef3f9" stroke-width="0.75"/>
<path d="M162 357.4 h3.2 l-1.6 1.9z" fill="#2478c8"/>
<path d="M94.4 370.6 l1.5 1.7 l2.6 -3.6" fill="none" stroke="#8a8a8a" stroke-width="0.7"/>
<path d="M162 369.9 h3.2 l-1.6 1.9z" fill="#2478c8"/>
<path d="M162 382.4 h3.2 l-1.6 1.9z" fill="#2478c8"/>
<path d="M94.4 395.6 l1.5 1.7 l2.6 -3.6" fill="none" stroke="#8a8a8a" stroke-width="0.7"/>
<path d="M162 394.9 h3.2 l-1.6 1.9z" fill="#2478c8"/>
<path d="M88 404.7 v4.2 l-3 -2.1z" fill="#1f72c4"/>
<path d="M894.8 404.7 v4.2 l3 -2.1z" fill="#1f72c4"/>
<path d="M903.5 357 h3.6 l-1.8 -2.3z" fill="#2f7fd0"/>
<path d="M903.5 396.5 h3.6 l-1.8 2.3z" fill="#2f7fd0"/>
<path d="M106.5 450.8 H112.4" stroke="#a3abb4" stroke-width="0.6"/>
<path d="M114.4 450.9 l1.4 1.6 l2.5 -3.4" fill="none" stroke="#8a8a8a" stroke-width="0.7"/>
<path d="M96.4 461.35 l1.6 1.8 l1.6 -1.8" fill="none" stroke="#2f7fd0" stroke-width="0.8"/>
<path d="M106.5 473.5 H112.4" stroke="#a3abb4" stroke-width="0.6"/>
<path d="M106.5 484.85 H112.4" stroke="#a3abb4" stroke-width="0.6"/>
<path d="M114.4 484.95 l1.4 1.6 l2.5 -3.4" fill="none" stroke="#8a8a8a" stroke-width="0.7"/>
<path d="M106.5 496.2 H112.4" stroke="#a3abb4" stroke-width="0.6"/>
<path d="M106.5 507.55 H112.4" stroke="#a3abb4" stroke-width="0.6"/>
<path d="M114.4 507.65 l1.4 1.6 l2.5 -3.4" fill="none" stroke="#8a8a8a" stroke-width="0.7"/>
<path d="M106.5 518.85 H112.4" stroke="#a3abb4" stroke-width="0.6"/>
<path d="M106.5 530.2 H112.4" stroke="#a3abb4" stroke-width="0.6"/>
<path d="M114.4 530.3 l1.4 1.6 l2.5 -3.4" fill="none" stroke="#8a8a8a" stroke-width="0.7"/>
<path d="M106.5 444.6 V450.5" stroke="#a3abb4" stroke-width="0.6"/>
<path d="M96.2 444.6 V456" stroke="#9aa3ad" stroke-width="0.6"/>
<path d="M106.5 467.3 V530" stroke="#a3abb4" stroke-width="0.6"/>
<path d="M903.5 450.5 h3.6 l-1.8 -2.3z" fill="#2f7fd0"/>
<path d="M903.5 539 h3.6 l-1.8 2.3z" fill="#2f7fd0"/>
<path d="M1035.4 80.6 h3.6 l-1.8 -2.4z" fill="#2f7fd0"/>
<path d="M1035.4 492.6 h3.6 l-1.8 2.4z" fill="#2f7fd0"/>
<path d="M1025.4 80.5 l1.6 -1.7 l1.6 1.7" fill="none" stroke="#2f7fd0" stroke-width="0.9"/>
<path d="M1024.6 90.1 h5 M1027.1 87.6 v5" stroke="#1fae1f" stroke-width="0.95"/>
<path d="M1024.6 99.8 h5 M1027.1 97.3 v5" stroke="#1fae1f" stroke-width="0.95"/>
<path d="M1025.4 110.2 l1.6 -1.7 l1.6 1.7" fill="none" stroke="#2f7fd0" stroke-width="0.9"/>
<path d="M1026 139.55 h3.2 l-1.6 2z" fill="#2478c8"/>
<path d="M1026 148.85 h3.2 l-1.6 2z" fill="#2478c8"/>
<path d="M1026 167.5 h3.2 l-1.6 2z" fill="#2478c8"/>
<path d="M1026 176.85 h3.2 l-1.6 2z" fill="#2478c8"/>
<path d="M1026 186.1 h3.2 l-1.6 2z" fill="#2478c8"/>
<path d="M1025.4 215.6 l1.6 -1.7 l1.6 1.7" fill="none" stroke="#2f7fd0" stroke-width="0.9"/>
<path d="M1026.2 252.1 l1.2 -1.4 l1.2 1.4 M1026.2 255.3 l1.2 1.4 l1.2 -1.4" fill="none" stroke="#b8c6d6" stroke-width="0.6"/>
<path d="M1026.2 263.45 l1.2 -1.4 l1.2 1.4 M1026.2 266.65 l1.2 1.4 l1.2 -1.4" fill="none" stroke="#b8c6d6" stroke-width="0.6"/>
<path d="M1025.4 341.55 l1.6 -1.7 l1.6 1.7" fill="none" stroke="#2f7fd0" stroke-width="0.9"/>
<g transform="translate(11 35.6) scale(0.92)"><path d="M-4 -5 H1.2 L4 -2.2 V5.2 H-4z" fill="#fff" stroke="#333" stroke-width="0.7" /><path d="M1.2 -5 V-2.2 H4" fill="none" stroke="#333" stroke-width="0.5" /><path d="M-2 2 H2.6 M0.3 -0.3 V4.3" fill="none" stroke="#2e2e2e" stroke-width="0.9" /></g>
<g transform="translate(31.5 35.6) scale(0.92)"><rect x="-5.4" y="-5.4" width="6.2" height="7.4" fill="#e3e3e3" stroke="#8a8a8a" stroke-width="0.6"/><path d="M-4.4 0.6 L-2.4 -3.8 L-0.6 0.6 M-4.6 -0.8 H-0.2" fill="none" stroke="#7d7d7d" stroke-width="0.6" /><path d="M1.6 1.4 L5.4 5 M5.6 2.2 V5.2 H2.6" fill="none" stroke="#2e2e2e" stroke-width="0.9" /></g>
<g transform="translate(54.4 35.6) scale(0.92)"><path d="M-5.2 -4 V0.6 A2.8 1.2 0 0 0 0.4 0.6 V-4" fill="#e2e2e2" stroke="#c6c6c6" stroke-width="0.6"/><ellipse cx="-2.4" cy="-4" rx="2.8" ry="1.2" fill="#ededed" stroke="#c6c6c6" stroke-width="0.6"/><path d="M2 1.8 L5.2 5 M5.4 2.6 V5.2 H2.8" fill="none" stroke="#c6c6c6" stroke-width="0.8" /></g>
<g transform="translate(76.4 35.6) scale(0.92)"><path d="M-5 -0.4 H2.6 V0.8 H4.4 L3.2 5 H-5z" fill="#8d8d8d" stroke="#333" stroke-width="0.7" /><path d="M1.4 -0.8 L5.6 -5 M2.6 -5.2 H5.8 V-2" fill="none" stroke="#2e2e2e" stroke-width="0.9" /></g>
<g transform="translate(98 35.6) scale(0.92)"><path d="M-5 -0.4 H2.6 V0.8 H4.4 L3.2 5 H-5z" fill="#8d8d8d" stroke="#333" stroke-width="0.7" /><path d="M-0.4 -5.4 V-1.2 M-2.4 -3 L-0.4 -1 L1.6 -3" fill="none" stroke="#2e2e2e" stroke-width="0.9" /></g>
<g transform="translate(120 35.6) scale(0.92)"><path d="M-5 -0.4 H2.6 V0.8 H4.4 L3.2 5 H-5z" fill="#8d8d8d" stroke="#333" stroke-width="0.7" /><path d="M-1.4 -5.4 V-1.2 M-3.4 -3 L-1.4 -1 L0.6 -3" fill="none" stroke="#2e2e2e" stroke-width="0.9" /><text x="2.4" y="-1.2" font-size="5.6" fill="#333" font-weight="normal" text-anchor="start" >?</text></g>
<g transform="translate(141.7 35.6) scale(0.92)"><g transform="translate(-0.6 -0.8)"><path d="M-3.2 -1.6 V-4.6 H3.2 V-1.6" fill="#fff" stroke="#2e2e2e" stroke-width="0.8" /><rect x="-5.2" y="-1.8" width="10.4" height="4.4" rx="0.8" fill="#2e2e2e"/><path d="M-3 1 H3 V4.8 H-3z" fill="#fff" stroke="#2e2e2e" stroke-width="0.8" /></g><rect x="1" y="0.6" width="4.8" height="5" fill="#d9852a"/><path d="M2 4.6 V2.2 L3.4 3.6 L4.8 2.2 V4.6" fill="none" stroke="#fff" stroke-width="0.6" /></g>
<g transform="translate(163.5 35.6) scale(0.92)"><path d="M-3.2 -1.6 V-4.6 H3.2 V-1.6" fill="#fff" stroke="#2e2e2e" stroke-width="0.8" /><rect x="-5.2" y="-1.8" width="10.4" height="4.4" rx="0.8" fill="#2e2e2e"/><path d="M-3 1 H3 V4.8 H-3z" fill="#fff" stroke="#2e2e2e" stroke-width="0.8" /></g>
<g transform="translate(193 35.6) scale(0.92)"><g transform="scale(1 1)"><path d="M-3.6 -1.2 A4.2 4.2 0 1 1 0.6 4.6" fill="none" stroke="#2e2e2e" stroke-width="0.9" /><path d="M-5 -3.6 L-3.9 -0.6 L-0.8 -1.6" fill="none" stroke="#2e2e2e" stroke-width="0.9" /></g></g>
<g transform="translate(214.8 35.6) scale(0.92)"><g transform="scale(-1 1)"><path d="M-3.6 -1.2 A4.2 4.2 0 1 1 0.6 4.6" fill="none" stroke="#c6c6c6" stroke-width="0.9" /><path d="M-5 -3.6 L-3.9 -0.6 L-0.8 -1.6" fill="none" stroke="#c6c6c6" stroke-width="0.9" /></g></g>
<g transform="translate(236.2 35.6) scale(0.92)"><path d="M-2.4 -5 L1.2 2.4 M2.4 -5 L-1.2 2.4" fill="none" stroke="#c6c6c6" stroke-width="0.8" /><circle cx="-1.9" cy="3.6" r="1.3" fill="none" stroke="#c6c6c6" stroke-width="0.7"/><circle cx="1.9" cy="3.6" r="1.3" fill="none" stroke="#c6c6c6" stroke-width="0.7"/></g>
<g transform="translate(259 35.6) scale(0.92)"><path d="M-2 -1.6 H3 V5 H-2z" fill="#f2f2f2" stroke="#c6c6c6" stroke-width="0.7" /><path d="M-0.4 -3.2 H3.2 L5 -1.4 V3.6 H-0.4z" fill="#f2f2f2" stroke="#c6c6c6" stroke-width="0.8" /><path d="M-5 -0.6 C-5 -3.6 -3 -4.6 -1.6 -4.4 M-2.8 -5.6 L-1.4 -4.4 L-2.8 -3" fill="none" stroke="#c6c6c6" stroke-width="0.7" /></g>
<g transform="translate(280.2 35.6) scale(0.92)"><rect x="-5" y="-4" width="6" height="8" fill="#e6e6e6" stroke="#c6c6c6" stroke-width="0.7"/><rect x="-1.6" y="-1.2" width="5.6" height="6.6" fill="#f6f6f6" stroke="#c6c6c6" stroke-width="0.7"/><path d="M1 -4.6 C3 -5.6 4.6 -4.6 4.8 -3 M3.4 -3.6 L4.8 -2.6 L5.8 -4" fill="none" stroke="#c6c6c6" stroke-width="0.7" /></g>
<g transform="translate(302 35.6) scale(0.92)"><path d="M-3.6 -3.8 L3.6 3.8 M3.6 -3.8 L-3.6 3.8" fill="none" stroke="#c6c6c6" stroke-width="0.8" /></g>
<g transform="translate(331.5 35.6) scale(0.92)"><rect x="-4.6" y="-4.4" width="9.2" height="9.2" fill="#fff" stroke="#8a8a8a" stroke-width="0.7"/><rect x="-4.9" y="-4.8" width="9.8" height="1.8" fill="#4a4a4a"/><path d="M-2.6 -1.8 V3.2 M-2.6 0.6 L-1 -0.4 L0.2 2.6 L2.6 3" fill="none" stroke="#2e2e2e" stroke-width="0.8" /></g>
<g transform="translate(353.5 35.6) scale(0.92)"><rect x="-4.6" y="-4.4" width="9.2" height="9.2" fill="#fff" stroke="#8a8a8a" stroke-width="0.7"/><rect x="-4.9" y="-4.8" width="9.8" height="1.8" fill="#4a4a4a"/><rect x="-2.6" y="-1.2" width="5" height="4" fill="none" stroke="#7d7d7d" stroke-width="0.6"/><path d="M-1.4 0.6 L-0.2 1.8 L2.4 -1.4" fill="none" stroke="#2e2e2e" stroke-width="0.8" /></g>
<g transform="translate(375 35.6) scale(0.92)"><rect x="-4.6" y="-4.4" width="9.2" height="9.2" fill="#fff" stroke="#8a8a8a" stroke-width="0.7"/><rect x="-4.9" y="-4.8" width="9.8" height="1.8" fill="#4a4a4a"/><path d="M-1 -1.6 V3 L0.2 2 L1.2 4 L2 3.6 L1 1.6 L2.6 1.4z" fill="#fff" stroke="#2e2e2e" stroke-width="0.6" /></g>
<g transform="translate(396.8 35.6) scale(0.92)"><rect x="-4.6" y="-4.4" width="9.2" height="9.2" fill="#fff" stroke="#8a8a8a" stroke-width="0.7"/><rect x="-4.9" y="-4.8" width="9.8" height="1.8" fill="#4a4a4a"/><path d="M-4.4 -0.6 H4.4 M-4.4 2 H4.4 M-1.6 -3 V4.6 M1.6 -0.6 V4.6" fill="none" stroke="#7d7d7d" stroke-width="0.6" /></g>
<g transform="translate(426.4 35.6) scale(0.92)"><circle r="5" fill="#fff" stroke="#2e2e2e" stroke-width="0.9"/><path d="M-1.5 -2.4 L2.6 0 L-1.5 2.4z" fill="#2e2e2e" stroke="#2e2e2e" stroke-width="0.2" /></g>
<g transform="translate(448 35.9) scale(0.92)"><path d="M0 -3.2 L-3 2.8 H3z" fill="none" stroke="#2e2e2e" stroke-width="0.8" /><circle cx="0" cy="-3.6" r="1.35" fill="#fff" stroke="#2e2e2e" stroke-width="0.8"/><circle cx="-3.2" cy="2.9" r="1.35" fill="#fff" stroke="#2e2e2e" stroke-width="0.8"/><circle cx="3.2" cy="2.9" r="1.35" fill="#fff" stroke="#2e2e2e" stroke-width="0.8"/></g>
<path d="M510.5 35 h3 l-1.5 1.725z" fill="#2f7fd0"/>
<g transform="translate(541.4 35.6) scale(0.92)"><rect x="-2.2" y="-5.6" width="4.4" height="4.6" rx="0.9" fill="#d6e4fb" stroke="#4a7de0" stroke-width="0.9"/><text x="0" y="5.4" font-size="4.9" fill="#222" font-weight="normal" text-anchor="middle" letter-spacing="-0.25">ICDD</text></g>
<g transform="translate(563.4 35.6) scale(0.92)"><circle r="4.1" fill="#fff" stroke="#2e2e2e" stroke-width="1.1" stroke-dasharray="2.2 1" /><circle r="3.7" fill="#fff" stroke="#2e2e2e" stroke-width="0.7"/><circle r="1.5" fill="none" stroke="#2e2e2e" stroke-width="0.7"/></g>
<g transform="translate(135.6 53.9)"><circle r="2.6" fill="#e8f1fa"/><circle r="1.1" fill="#0070c0"/></g>
<g transform="translate(52 52.6)"><path d="M-1.3 -2.5 H1.3 M-0.9 -2.4 V0.3 H0.9 V-2.4 M-1.7 0.4 H1.7 M0 0.4 V2.9" fill="none" stroke="#333" stroke-width="0.6" /><path d="M0.5 -2.2 V0.2" fill="none" stroke="#333" stroke-width="0.7" /></g>
<g transform="translate(69.4 52.6)"><path d="M-1.9 -1.9 L1.9 1.9 M1.9 -1.9 L-1.9 1.9" fill="none" stroke="#333" stroke-width="0.7" /></g>
<g transform="translate(887 315)"><path d="M-1.3 -2.5 H1.3 M-0.9 -2.4 V0.3 H0.9 V-2.4 M-1.7 0.4 H1.7 M0 0.4 V2.9" fill="none" stroke="#ffffff" stroke-width="0.6" /><path d="M0.5 -2.2 V0.2" fill="none" stroke="#ffffff" stroke-width="0.7" /></g>
<g transform="translate(903.2 315)"><path d="M-2.1 -2.1 L2.1 2.1 M2.1 -2.1 L-2.1 2.1" fill="none" stroke="#ffffff" stroke-width="0.7" /></g>
<g transform="translate(886.6 423.3)"><path d="M-1.3 -2.5 H1.3 M-0.9 -2.4 V0.3 H0.9 V-2.4 M-1.7 0.4 H1.7 M0 0.4 V2.9" fill="none" stroke="#333" stroke-width="0.6" /><path d="M0.5 -2.2 V0.2" fill="none" stroke="#333" stroke-width="0.7" /></g>
<g transform="translate(903.6 423.3)"><path d="M-1.9 -1.9 L1.9 1.9 M1.9 -1.9 L-1.9 1.9" fill="none" stroke="#333" stroke-width="0.7" /></g>
<g transform="translate(1019.2 52.6)"><path d="M-1.3 -2.5 H1.3 M-0.9 -2.4 V0.3 H0.9 V-2.4 M-1.7 0.4 H1.7 M0 0.4 V2.9" fill="none" stroke="#333" stroke-width="0.6" /><path d="M0.5 -2.2 V0.2" fill="none" stroke="#333" stroke-width="0.7" /></g>
<g transform="translate(1036.3 52.6)"><path d="M-1.9 -1.9 L1.9 1.9 M1.9 -1.9 L-1.9 1.9" fill="none" stroke="#333" stroke-width="0.7" /></g>
<g transform="translate(61.8 67.7)"><path d="M-1.7 0.9 L0 -0.9 L1.7 0.9" fill="none" stroke="#2f7fd0" stroke-width="0.9" /></g>
<g transform="translate(61.8 195.4)"><path d="M-1.7 0.9 L0 -0.9 L1.7 0.9" fill="none" stroke="#2f7fd0" stroke-width="0.9" /></g>
<g transform="translate(61.8 323.7)"><path d="M-1.7 0.9 L0 -0.9 L1.7 0.9" fill="none" stroke="#2f7fd0" stroke-width="0.9" /></g>
<g transform="translate(61.8 386.4)"><path d="M-1.7 0.9 L0 -0.9 L1.7 0.9" fill="none" stroke="#2f7fd0" stroke-width="0.9" /></g>
<path d="M71.3 66 h3.6 l-1.8 -2.4z" fill="#2f7fd0"/>
<path d="M70.9 539 h3.6 l-1.8 2.4z" fill="#2f7fd0"/>
<path d="M918.8 67 h2.6 l-1.3 -1.7z" fill="#5a9be0"/>
<g transform="translate(928.8 66.2)"><path d="M-1.6 -1.7 L1.6 1.7 M1.6 -1.7 L-1.6 1.7" fill="none" stroke="#f02020" stroke-width="1.0" /></g>
<path d="M935.9 65.5 h3.4 l-1.7 1.955z" fill="#2f7fd0"/>
<rect x="86.5" y="68.6" width="1.1" height="1.1" fill="#2b78c8"/><rect x="86.5" y="70.7" width="1.1" height="1.1" fill="#2b78c8"/><rect x="86.5" y="72.8" width="1.1" height="1.1" fill="#2b78c8"/><rect x="86.5" y="74.9" width="1.1" height="1.1" fill="#2b78c8"/>
<g transform="translate(102.5 72)"><path d="M-6.50 3.40 L-5.17 2.83 L-4.22 -1.35 L-3.46 2.45 L-2.51 1.50 L-1.56 -5.15 L-0.61 2.07 L0.53 2.83 L2.52 3.21 L4.90 3.30" fill="none" stroke="#444" stroke-width="0.6" /><path d="M-6.4 4.8 C-3 5.6 -1 4.4 1 5 C3 5.6 4 5.2 6.4 5.2" fill="none" stroke="#cc3aa2" stroke-width="0.9" /><path d="M2.2 -5.6 L5.2 -2.6 M5.2 -5.6 L2.2 -2.6" fill="none" stroke="#2e2e2e" stroke-width="0.8" /></g>
<g transform="translate(124.2 72)"><path d="M-5.80 0.80 L-4.82 0.38 L-4.12 -2.70 L-3.56 0.10 L-2.86 -0.60 L-2.16 -5.50 L-1.46 -0.18 L-0.62 0.38 L0.85 0.66 L2.60 0.73" fill="none" stroke="#c6c6c6" stroke-width="0.6" /><path d="M2.4 -5.4 L5.4 -2.4 M5.4 -5.4 L2.4 -2.4" fill="none" stroke="#c6c6c6" stroke-width="0.7" /><text x="-6.6" y="5.6" font-size="6.6" fill="#c6c6c6" font-weight="normal" text-anchor="start" >Kα2</text></g>
<g transform="translate(146 72)"><path d="M-6 5 L-4.6 0 L-3.6 4.6 L-2.2 -3.6 L-0.8 4.8 L0.4 1.8 L1.4 4.8 L2.6 3.6 L3.6 5 L6 5" fill="none" stroke="#cc3aa2" stroke-width="1.0" /><text x="1.4" y="-0.8" font-size="7" fill="#222" font-weight="bold" text-anchor="start" font-style="italic" font-family="Liberation Serif">F</text></g>
<g transform="translate(168.3 72)"><path d="M-6.4 5 L-4.6 -4.4 L-3 4.4 L-2 1.4 L-1 4.8 L0 4.8" fill="none" stroke="#cc3aa2" stroke-width="1.0" /><path d="M0.2 -2.2 H5.4 V-0.2 H-0.8 C-0.6 -1.6 0.2 -2.2 0.2 -2.2z M1 -3.4 C2 -5.2 5 -5 5.2 -2.4" fill="none" stroke="#2e2e2e" stroke-width="0.7" /><path d="M2.4 1.2 V4.6 M0.8 3.2 L2.4 4.8 L4 3.2" fill="none" stroke="#2e2e2e" stroke-width="0.8" /></g>
<g transform="translate(189.6 72)"><path d="M-6.4 5 L-5 -1 L-4.2 5 L-3 -4.6 L-1.8 5 L-1 1 L-0.4 5 L5.4 5z" fill="#cc3aa2" stroke="#cc3aa2" stroke-width="0.8" /><path d="M1.4 -3.4 H6 M3.4 -5.4 L1.4 -3.4 L3.4 -1.4" fill="none" stroke="#2e2e2e" stroke-width="0.8" /></g>
<g transform="translate(211.3 72)"><path d="M-5.8 -4.6 V4.2" fill="none" stroke="#7d7d7d" stroke-width="0.6" /><path d="M-5.20 3.60 L-4.08 3.12 L-3.28 -0.40 L-2.64 2.80 L-1.84 2.00 L-1.04 -3.60 L-0.24 2.48 L0.72 3.12 L2.40 3.44 L4.40 3.52" fill="none" stroke="#7d7d7d" stroke-width="0.6" /><path d="M-6 5 H6" fill="none" stroke="#cc3aa2" stroke-width="1.2" /><path d="M-1.4 -3.8 H5.6 M0.2 -5.4 L-1.4 -3.8 L0.2 -2.2 M4 -5.4 L5.6 -3.8 L4 -2.2" fill="none" stroke="#2e2e2e" stroke-width="0.8" /></g>
<g transform="translate(233.6 72)"><path d="M-5.6 -5.6 V5.2" fill="none" stroke="#cc3aa2" stroke-width="1.0" /><path d="M-6.8 -4.2 L-5.6 -5.8 L-4.4 -4.2" fill="none" stroke="#cc3aa2" stroke-width="0.7" /><path d="M-4.4 4.4 L-3.4 -0.4 L-2.4 4 L-1 -2 C-0.4 3.6 1 3.8 5.8 3.8 M-4.4 5.4 H5.8" fill="none" stroke="#7d7d7d" stroke-width="0.6" /><rect x="1" y="-5.6" width="5" height="5" fill="#9a9a9a" stroke="#2e2e2e" stroke-width="0.8"/></g>
<g transform="translate(255.4 72)"><path d="M-5.6 -5.6 V5.2" fill="none" stroke="#cc3aa2" stroke-width="1.0" /><path d="M-6.8 -4.2 L-5.6 -5.8 L-4.4 -4.2" fill="none" stroke="#cc3aa2" stroke-width="0.7" /><path d="M-4.4 4.4 L-3.4 -0.4 L-2.4 4 L-1 -2 C-0.4 3.6 1 3.8 5.8 3.8 M-4.4 5.4 H5.8" fill="none" stroke="#7d7d7d" stroke-width="0.6" /><path d="M3.6 -5 V1.4 M2 -3.6 L3.6 -5.4 L5.2 -3.6 M2 0 L3.6 1.8 L5.2 0" fill="none" stroke="#2e2e2e" stroke-width="0.8" /></g>
<g transform="translate(276.7 72)"><rect x="-5.6" y="-1" width="7" height="6" fill="#e9e9e9" stroke="#c6c6c6" stroke-width="0.5"/><rect x="-0.4" y="-5.6" width="6.4" height="5.6" rx="2" fill="#eeeeee" stroke="#c6c6c6" stroke-width="0.5"/></g>
<g transform="translate(297.8 72)"><rect x="-5.6" y="-1" width="6.6" height="6" fill="#e6e6e6" stroke="#c6c6c6" stroke-width="0.5"/><circle cx="3.6" cy="-3.4" r="2.5" fill="#f2f2f2" stroke="#c6c6c6" stroke-width="0.6"/><path d="M2.2 -3.4 H5 M3.6 -4.8 V-2" fill="none" stroke="#c6c6c6" stroke-width="0.6" /></g>
<g transform="translate(320.4 72)"><rect x="-6" y="-5.8" width="6.6" height="6" fill="#e6e6e6" stroke="#c6c6c6" stroke-width="0.5"/><circle cx="3.8" cy="3" r="2.5" fill="#f2f2f2" stroke="#c6c6c6" stroke-width="0.6"/><path d="M2.4 3 H5.2" fill="none" stroke="#c6c6c6" stroke-width="0.6" /></g>
<g transform="translate(342.4 72)"><rect x="-6" y="-4.8" width="8.4" height="8.6" fill="#e2e2e2" stroke="#c6c6c6" stroke-width="0.5"/><rect x="0.4" y="-1.4" width="6" height="6.8" fill="#ebebeb" stroke="#c6c6c6" stroke-width="0.5"/></g>
<g transform="translate(364.2 72)"><path d="M-5 -6 H-6.2 V-1 H-5 M5 -6 H6.2 V-1 H5" fill="none" stroke="#2e2e2e" stroke-width="0.7" /><path d="M-4.4 -1.4 L-2.6 -5.6 L-1.6 -1.6 L0 -5 C0.6 -2 1.6 -1.6 4.4 -1.6" fill="none" stroke="#2e2e2e" stroke-width="0.7" /><path d="M-5.6 5 L-4.2 1.6 L-3 4.8 L-1.6 0.6 L-0.4 4.8 L0.8 3 L1.8 4.6 L6 4.4" fill="none" stroke="#cc3aa2" stroke-width="0.9" /></g>
<path d="M378.8 71 h3 l-1.5 1.725z" fill="#2f7fd0"/>
<rect x="86.5" y="88.4" width="1.1" height="1.1" fill="#2b78c8"/><rect x="86.5" y="90.5" width="1.1" height="1.1" fill="#2b78c8"/><rect x="86.5" y="92.6" width="1.1" height="1.1" fill="#2b78c8"/><rect x="86.5" y="94.7" width="1.1" height="1.1" fill="#2b78c8"/>
<g transform="translate(103 91.8)"><path d="M-6 -6.4 V6 H5.4" fill="none" stroke="#333" stroke-width="0.8" /><path d="M-7.2 -4.8 L-6 -6.6 L-4.8 -4.8" fill="none" stroke="#2e2e2e" stroke-width="0.7" /><path d="M-3.6 -1.6 L-1.6 -4.6 L-1 -2 L0.6 -5 V-1.6 H-3.6" fill="#555" stroke="#2e2e2e" stroke-width="0.7" /></g>
<path d="M111.3 90.6 h3 l-1.5 1.725z" fill="#333"/>
<g transform="translate(129.3 91.8)"><path d="M-6 -6.4 V6 H5.4" fill="none" stroke="#333" stroke-width="0.8" /><path d="M-7.2 -4.8 L-6 -6.6 L-4.8 -4.8" fill="none" stroke="#2e2e2e" stroke-width="0.7" /><path d="M-4.2 4.4 L4.4 -4.4" fill="none" stroke="#2e2e2e" stroke-width="0.8" /></g>
<path d="M137.5 90.6 h3 l-1.5 1.725z" fill="#333"/>
<g transform="translate(156.4 91.8)"><path d="M-3.4 -6.6 V5 M-6 5.2 H6 M-5.4 2.6 L-3.4 5 L-1.4 2.6 M4.2 3.8 L6 5.2 L4.2 6.6" fill="none" stroke="#2e2e2e" stroke-width="0.9" /><circle cx="2" cy="-3" r="2.7" fill="#f4f4f4" stroke="#7d7d7d" stroke-width="0.7"/><path d="M3.89 -1.11 l2.43 2.43" stroke="#7d7d7d" stroke-width="1.0"/><path d="M0.6 -3 H3.4 M2 -4.4 V-1.6" fill="none" stroke="#7d7d7d" stroke-width="0.5" /></g>
<g transform="translate(177.4 91.8)"><circle cx="-3" cy="0.8" r="2.7" fill="none" stroke="#7d7d7d" stroke-width="0.7"/><path d="M-1.11 2.69 l2.43 2.43" stroke="#7d7d7d" stroke-width="1.0"/><path d="M-4.4 0.8 H-1.6 M-3 -0.6 V2.2" fill="none" stroke="#7d7d7d" stroke-width="0.5" /><path d="M4 -6 V0.6 M2 -4 L4 -6.2 L6 -4" fill="none" stroke="#2e2e2e" stroke-width="0.9" /></g>
<g transform="translate(199.2 91.8)"><circle cx="2.6" cy="-3" r="2.7" fill="none" stroke="#7d7d7d" stroke-width="0.7"/><path d="M4.49 -1.11 l2.43 2.43" stroke="#7d7d7d" stroke-width="1.0"/><path d="M1.2 -3 H4 M2.6 -4.4 V-1.6" fill="none" stroke="#7d7d7d" stroke-width="0.5" /><path d="M-3.4 -0.6 V6 M-5.4 4 L-3.4 6.2 L-1.4 4" fill="none" stroke="#2e2e2e" stroke-width="0.9" /></g>
<g transform="translate(221.7 92.4)"><g transform="scale(1 1)"><path d="M-3.6 -1.2 A4.2 4.2 0 1 1 0.6 4.6" fill="none" stroke="#c6c6c6" stroke-width="0.9" /><path d="M-5 -3.6 L-3.9 -0.6 L-0.8 -1.6" fill="none" stroke="#c6c6c6" stroke-width="0.9" /></g></g>
<g transform="translate(242.7 92.4)"><g transform="scale(-1 1)"><path d="M-3.6 -1.2 A4.2 4.2 0 1 1 0.6 4.6" fill="none" stroke="#c6c6c6" stroke-width="0.9" /><path d="M-5 -3.6 L-3.9 -0.6 L-0.8 -1.6" fill="none" stroke="#c6c6c6" stroke-width="0.9" /></g></g>
<g transform="translate(265.2 91.8)"><rect x="-6.6" y="-6.4" width="3.4" height="3.4" fill="#d4d4d4" stroke="#7d7d7d" stroke-width="0.7"/><path d="M-1.8 -5.6 C2 -5.6 3 -4.6 3 -1.6 M1 -3.4 L3 -1.2 L5 -3.4" fill="none" stroke="#2e2e2e" stroke-width="0.9" /><rect x="0.2" y="0" width="5.8" height="6" fill="#bbb" stroke="#7d7d7d" stroke-width="0.7"/><rect x="1.8" y="1.6" width="2.6" height="2.8" fill="#fff" stroke="#fff" stroke-width="0.7"/></g>
<g transform="translate(287.4 91.8)"><rect x="-6.6" y="-6.4" width="2.4" height="4.4" fill="#d4d4d4" stroke="#7d7d7d" stroke-width="0.7"/><path d="M-1.8 -5.6 C2 -5.6 3 -4.6 3 -1.6 M1 -3.4 L3 -1.2 L5 -3.4" fill="none" stroke="#2e2e2e" stroke-width="0.9" /><rect x="0" y="0" width="6" height="6" fill="#fff" stroke="#2e2e2e" stroke-width="0.7"/><path d="M2 0 V6 M4 0 V6" fill="none" stroke="#2e2e2e" stroke-width="0.6" /></g>
<g transform="translate(309.2 91.8)"><rect x="-6.4" y="-6" width="4" height="12" fill="#cc3aa2"/><path d="M-5.8 -6 L-3 6 M-3 -6 L-5.8 6" fill="none" stroke="#f4c0e4" stroke-width="0.6" /><path d="M0.6 -5.6 L4 1.6 M4.6 -5.6 L1.4 1.6" fill="none" stroke="#2e2e2e" stroke-width="0.8" /><circle cx="1" cy="2.6" r="1.1" fill="none" stroke="#2e2e2e" stroke-width="0.6"/><circle cx="4.2" cy="2.6" r="1.1" fill="none" stroke="#2e2e2e" stroke-width="0.6"/><path d="M-1.6 5.4 C0 3.6 1.6 5.8 3 4.8 L5.8 5.4" fill="none" stroke="#2e2e2e" stroke-width="0.6" /></g>
<g transform="translate(331 91.8)"><rect x="-6.4" y="-6" width="3.4" height="12" fill="#3b8cf0"/><path d="M-5.8 -6 L-3.6 6 M-3.6 -6 L-5.8 6" fill="none" stroke="#cfe3fb" stroke-width="0.6" /><path d="M0.4 -2.2 A3.2 3.2 0 1 1 3.4 2.6 M-0.8 -4.8 L0.2 -1.8 L3 -2.8" fill="none" stroke="#2e2e2e" stroke-width="0.9" /><path d="M-2.4 5.4 C-1 3.6 0.4 5.8 2 4.8 L5.4 5.4" fill="none" stroke="#2e2e2e" stroke-width="0.6" /></g>
<g transform="translate(352.7 91.8)"><path d="M-3 -2.4 H2.2 V5.4 H-3z" fill="#ddd" stroke="#2e2e2e" stroke-width="0.7" /><path d="M-1.2 -4.2 H2.8 L5 -2 V4 H-1.2z" fill="#fff" stroke="#2e2e2e" stroke-width="0.8" /><path d="M2.8 -4.2 V-2 H5" fill="none" stroke="#2e2e2e" stroke-width="0.6" /><path d="M-6.4 0 C-6.6 -3.6 -4.6 -5.2 -2.6 -5 M-4.2 -6.4 L-2.6 -5 L-4 -3.4" fill="none" stroke="#2e2e2e" stroke-width="0.8" /></g>
<path d="M360.5 90.6 h3 l-1.5 1.725z" fill="#333"/>
<g transform="translate(378.5 91.8)"><circle cx="-3" cy="3.4" r="2.2" fill="#e4e4e4" stroke="#c6c6c6" stroke-width="0.5"/><circle cx="1" cy="3.4" r="2.2" fill="#e4e4e4" stroke="#c6c6c6" stroke-width="0.5"/><circle cx="-1" cy="0.4" r="2.2" fill="#e4e4e4" stroke="#c6c6c6" stroke-width="0.5"/><path d="M1.4 -2.4 V-6 H3.6 L4.6 -3.4 L6.6 -6.4" fill="none" stroke="#c6c6c6" stroke-width="0.6" /></g>
<g transform="translate(400.9 91.8)"><path d="M-6 5 V-1 M-4.4 5 V-3.6 M-2.6 5 V-1.6" fill="none" stroke="#8a8a8a" stroke-width="0.7" /><path d="M-0.6 -6.4 V5.6" fill="none" stroke="#2e2e2e" stroke-width="0.9" /><path d="M1.6 -4.4 V3 L3 1.6 L4.2 4.2 L5.2 3.6 L4 1.2 L6 0.8z" fill="#fff" stroke="#7d7d7d" stroke-width="0.6" /></g>
<g transform="translate(422.6 91.8)"><path d="M-5.8 6 V1 M-3.4 6 V-3 M-0.8 6 V0.6" fill="none" stroke="#3b8cf0" stroke-width="1.2" stroke-dasharray="2.6 0.8"/><rect x="2" y="-6.2" width="3.6" height="10.4" fill="#fff" stroke="#2e2e2e" stroke-width="0.9"/><path d="M3.8 -4 V2" fill="none" stroke="#7d7d7d" stroke-width="0.5" /></g>
<g transform="translate(444.4 91.8)"><rect x="-6.2" y="-6.2" width="12.4" height="5" fill="#555" stroke="#2e2e2e" stroke-width="0.7"/><path d="M-5 -2.4 L-3.4 -4.6 L-1.8 -2.6 L0 -4.8 L1.8 -2.6 L3.4 -4.6 L5 -2.4" fill="none" stroke="#fff" stroke-width="0.6" /><path d="M-6 4.6 H-1.4 L0 0.4 L1.4 4.6 H6" fill="none" stroke="#7d7d7d" stroke-width="0.7" /></g>
<g transform="translate(465.7 91.8)"><path d="M-5.4 5.4 L-3 -6 L-2.2 5.4z" fill="#555" stroke="#2e2e2e" stroke-width="0.5" /><path d="M-2 5 L-0.6 -2 L0.4 5" fill="none" stroke="#7d7d7d" stroke-width="0.6" /><path d="M-1 0 H5 M-0.6 2.4 H5.6 M-5.6 5.6 H6" fill="none" stroke="#7d7d7d" stroke-width="0.6" /></g>
<g transform="translate(488.4 91.8)"><path d="M-6 1.4 H-3 L-2 -1.4 L-1 1.4 L0.2 -6 L1.6 1.4 H6" fill="none" stroke="#8a8a8a" stroke-width="0.7" /><path d="M-6.2 5 H6.2" fill="none" stroke="#2e2e2e" stroke-width="1.0" /><path d="M-2.4 3.6 V6.4 M1.2 3.6 V6.4" fill="none" stroke="#2e2e2e" stroke-width="1.0" /></g>
<g transform="translate(509.7 91.8)"><path d="M-6 4.6 H-4 L-3 0.6 L-2 4.4 L-0.4 -6 C0.2 2 1 4.4 3 4.6 H6" fill="none" stroke="#777" stroke-width="0.7" /><rect x="1.6" y="-5.8" width="4.6" height="3" rx="0.6" fill="#8a8a8a" stroke="#555" stroke-width="0.5"/></g>
<g transform="translate(531.5 91.8)"><path d="M-5.8 6 V1" fill="none" stroke="#cc3aa2" stroke-width="1.0" opacity="0.6"/><path d="M-3.2 6 V-6.6" fill="none" stroke="#cc3aa2" stroke-width="1.2" /><path d="M0 6 V-0.4 M2.6 6 V2 M5 6 V4" fill="none" stroke="#cc3aa2" stroke-width="1.0" opacity="0.65"/><path d="M-0.6 -4 C1.4 -6.6 4.6 -6.6 6.6 -4 C4.6 -1.6 1.4 -1.6 -0.6 -4z" fill="#fff" stroke="#2e2e2e" stroke-width="0.7" /><circle cx="3" cy="-4" r="1.4" fill="#2e2e2e"/></g>
<g transform="translate(553.2 91.8)"><path d="M-5.8 5.6 L-3.6 -6 L-1.6 5.6 M-5.6 0 H-1.8 M-6 2.6 H-1.4 M-5 -2.6 H-2.4" fill="none" stroke="#c6c6c6" stroke-width="0.6" /><rect x="0.8" y="-6.2" width="5.2" height="12" fill="none" stroke="#c6c6c6" stroke-width="0.7"/><path d="M3.4 -6 V0 L2.4 2 L3.4 5.6" fill="none" stroke="#c6c6c6" stroke-width="0.5" /></g>
<g transform="translate(575 91.8)"><path d="M-6 6 L-4.4 -2 L-3 5.6 H6" fill="none" stroke="#c6c6c6" stroke-width="0.6" /><path d="M-3.4 -3.4 L0.6 -6.4 L6 -1.4 L1.6 2.4z" fill="#f3f3f3" stroke="#c6c6c6" stroke-width="0.7" /><circle cx="0.4" cy="-4" r="0.9" fill="none" stroke="#c6c6c6" stroke-width="0.5"/></g>
<path d="M590 90.8 h3 l-1.5 1.725z" fill="#2f7fd0"/>
<rect x="600.9" y="88.4" width="1.1" height="1.1" fill="#2b78c8"/><rect x="600.9" y="90.5" width="1.1" height="1.1" fill="#2b78c8"/><rect x="600.9" y="92.6" width="1.1" height="1.1" fill="#2b78c8"/><rect x="600.9" y="94.7" width="1.1" height="1.1" fill="#2b78c8"/>
<g transform="translate(617.4 91.8)"><path d="M-6.2 3 H-2.4 L-1.6 0.4 L-0.8 2.6 L0.4 -6 L1.6 3 H6.2" fill="none" stroke="#2e2e2e" stroke-width="1.0" /><path d="M0 3 L0.4 -5.6 L1.2 3z" fill="#444" stroke="#2e2e2e" stroke-width="0.4" /></g>
<g transform="translate(638.5 91.8)"><path d="M-6 1.6 H-2.4 L-1.6 -1.6 L-0.8 1.2 L0.4 -6.4 L1.6 1.6 H6" fill="none" stroke="#9a9a9a" stroke-width="0.7" /><path d="M-6.2 5.4 H6.2" fill="none" stroke="#2e2e2e" stroke-width="1.0" /><path d="M-2 5.4 L-1.4 4 L-0.8 6.6 L-0.2 5.4 M0.8 5.4 L1.6 6.8 L2.2 4.2 L2.8 5.4" fill="none" stroke="#2e2e2e" stroke-width="0.7" /></g>
<g transform="translate(660.3 91.8)"><path d="M-6 1.6 H-2.4 L-1.6 -1.6 L-0.8 1.2 L0.4 -6.4 L1.6 1.6 H6" fill="none" stroke="#8a8a8a" stroke-width="0.7" /><path d="M-6.2 4.8 C-2 4.2 2 6.2 6.2 6.2" fill="none" stroke="#2e2e2e" stroke-width="1.1" /><path d="M-6.2 5.2 H6" fill="none" stroke="#999" stroke-width="0.5" /></g>
<g transform="translate(682.3 91.8)"><path d="M-6.4 5.2 H-5 L-3.8 -2.6 L-2.6 5.2 H-0.8" fill="none" stroke="#999" stroke-width="0.7" /><path d="M-1.4 5.2 L0.2 -6.4 L1.8 5.2z" fill="#444" stroke="#2e2e2e" stroke-width="0.5" /><path d="M1.8 5.2 H6.4" fill="none" stroke="#999" stroke-width="0.6" /></g>
<path d="M696.5 90.8 h3 l-1.5 1.725z" fill="#2f7fd0"/>
<rect x="707.9" y="88.4" width="1.1" height="1.1" fill="#2b78c8"/><rect x="707.9" y="90.5" width="1.1" height="1.1" fill="#2b78c8"/><rect x="707.9" y="92.6" width="1.1" height="1.1" fill="#2b78c8"/><rect x="707.9" y="94.7" width="1.1" height="1.1" fill="#2b78c8"/>
<g transform="translate(723.5 91.8)"><path d="M-6 5.4 L-4.6 -6 L-3.4 4 L-1.6 2 C0 5 2 3.6 3.4 4.8 L6 5.2" fill="none" stroke="#c6c6c6" stroke-width="0.7" /><circle cx="1.2" cy="-3.2" r="2.5" fill="#ececec" stroke="#c6c6c6" stroke-width="0.7"/><path d="M2.95 -1.45 l2.25 2.25" stroke="#c6c6c6" stroke-width="1.0"/></g>
<g transform="translate(745.8 91.8)"><circle cx="0.6" cy="-3.6" r="2.5" fill="#ececec" stroke="#c6c6c6" stroke-width="0.7"/><path d="M2.35 -1.85 l2.25 2.25" stroke="#c6c6c6" stroke-width="1.0"/><text x="-6.8" y="6.6" font-size="7" fill="#c6c6c6" font-weight="normal" text-anchor="start" >Abc</text></g>
<g transform="translate(768.7 91.8)"><circle cx="1.6" cy="-3.6" r="2.5" fill="#ececec" stroke="#c6c6c6" stroke-width="0.7"/><path d="M3.35 -1.85 l2.25 2.25" stroke="#c6c6c6" stroke-width="1.0"/><text x="-6.6" y="6.6" font-size="6.8" fill="#c6c6c6" font-weight="normal" text-anchor="start" >123</text></g>
<g transform="translate(789.3 91.8)"><text x="-6" y="-0.8" font-size="6.6" fill="#c6c6c6" font-weight="normal" text-anchor="start" >+hkl</text><path d="M-5 6 V0.6 M-3.4 6 V2.4 M-1.8 6 V4 M1.2 6 V1.6 M2.6 6 V3.4 M4.4 6 V4.6" fill="none" stroke="#c6c6c6" stroke-width="0.8" /></g>
<path d="M819.9 90.8 h3 l-1.5 1.725z" fill="#2f7fd0"/>
<rect x="831.2" y="88.4" width="1.1" height="1.1" fill="#2b78c8"/><rect x="831.2" y="90.5" width="1.1" height="1.1" fill="#2b78c8"/><rect x="831.2" y="92.6" width="1.1" height="1.1" fill="#2b78c8"/><rect x="831.2" y="94.7" width="1.1" height="1.1" fill="#2b78c8"/>
<g transform="translate(846.6 91.8)"><path d="M-5.4 6 V0 M-3.2 6 V-6 M-1.2 6 V1.6 M1 6 V2.6 M3.2 6 V4 M5.4 6 V4.8" fill="none" stroke="#c6c6c6" stroke-width="0.7" /><circle cx="1.4" cy="-3.2" r="2.5" fill="#ececec" stroke="#c6c6c6" stroke-width="0.7"/><path d="M3.15 -1.45 l2.25 2.25" stroke="#c6c6c6" stroke-width="1.0"/></g>
<path d="M861.5 90.8 h3 l-1.5 1.725z" fill="#2f7fd0"/>
<rect x="872.5" y="88.4" width="1.1" height="1.1" fill="#2b78c8"/><rect x="872.5" y="90.5" width="1.1" height="1.1" fill="#2b78c8"/><rect x="872.5" y="92.6" width="1.1" height="1.1" fill="#2b78c8"/><rect x="872.5" y="94.7" width="1.1" height="1.1" fill="#2b78c8"/>
<g transform="translate(887.9 91.8)"><path d="M-3.2 5.4 L-1.6 -6 L0 5.4z" fill="#9ad6ac" stroke="#2aa04a" stroke-width="0.5" /><path d="M-2.5 5 L-1.6 -4 L-0.7 5" fill="none" stroke="#2aa04a" stroke-width="0.7" /><circle cx="-1.4" cy="-3.6" r="2.6" fill="none" stroke="#2e2e2e" stroke-width="0.9"/><path d="M0.4 -1.6 L2.8 1.2" fill="none" stroke="#2e2e2e" stroke-width="1.3" /><path d="M-5.6 5.6 H-3 M0.4 4.6 C2 3.6 2.6 5.8 4 5.6 L6.4 6" fill="none" stroke="#2e2e2e" stroke-width="0.6" /></g>
<path d="M902.9 90.8 h3 l-1.5 1.725z" fill="#2f7fd0"/>
<g transform="translate(12.4 83.4)"><path d="M-4.2 3.6 V-0.6 M-2.6 3.6 V-2" fill="none" stroke="#aaa" stroke-width="0.7" /><path d="M-0.6 -4.4 V4" fill="none" stroke="#2e2e2e" stroke-width="0.9" /><path d="M1.4 -2.4 V2.4 L2.4 1.4 L3.2 3.2 L3.9 2.9 L3.1 1.1 L4.3 0.8z" fill="#fff" stroke="#7d7d7d" stroke-width="0.5" /></g>
<g transform="translate(12.4 94.3)"><path d="M-4.2 4.4 V0 M-2.6 4.4 V-2 M-0.8 4.4 V0.6" fill="none" stroke="#4b9bf2" stroke-width="1.1" /><rect x="1.2" y="-4.6" width="2.4" height="7.6" fill="#fff" stroke="#2e2e2e" stroke-width="0.8"/></g>
<g transform="translate(12.4 105.4)"><rect x="-4.4" y="-4.4" width="2.8" height="2.8" fill="#aaa" stroke="#666" stroke-width="0.5"/><path d="M2.2 -4.6 V-0.6 M0.8 -2 L2.2 -0.4 L3.6 -2" fill="none" stroke="#2e2e2e" stroke-width="0.7" /><path d="M-3 -1 V3.4 M-3 0.6 H0 M-3 3 H0" fill="none" stroke="#aaa" stroke-width="0.5" /><rect x="0" y="-0.4" width="2" height="2" fill="#ccc"/><rect x="0" y="2.2" width="2" height="2" fill="#ccc"/></g>
<g transform="translate(12.4 116.2)"><rect x="-4.4" y="-4.8" width="3" height="2.6" fill="#555"/><rect x="-4.4" y="-1.6" width="3" height="2.6" fill="#777"/><rect x="-4.4" y="1.6" width="3" height="2.8" fill="#555"/><path d="M2.4 4.6 V0.2 M0.8 1.8 L2.4 0 L4 1.8" fill="none" stroke="#2e2e2e" stroke-width="0.7" /></g>
<g transform="translate(12.4 127.1)"><path d="M-2.9 -2.9 L2.9 2.9 M2.9 -2.9 L-2.9 2.9" fill="none" stroke="#2e2e2e" stroke-width="0.8" /></g>
<g transform="translate(12.4 138)"><g transform="scale(0.8)"><path d="M-2.4 -5 L1.2 2.4 M2.4 -5 L-1.2 2.4" fill="none" stroke="#2e2e2e" stroke-width="0.8" /><circle cx="-1.9" cy="3.6" r="1.3" fill="none" stroke="#2e2e2e" stroke-width="0.7"/><circle cx="1.9" cy="3.6" r="1.3" fill="none" stroke="#2e2e2e" stroke-width="0.7"/></g></g>
<g transform="translate(12.4 149)"><g transform="scale(0.85)"><path d="M-2 -1.6 H3 V5 H-2z" fill="#fff" stroke="#2e2e2e" stroke-width="0.7" /><path d="M-0.4 -3.2 H3.2 L5 -1.4 V3.6 H-0.4z" fill="#fff" stroke="#2e2e2e" stroke-width="0.8" /><path d="M-5 -0.6 C-5 -3.6 -3 -4.6 -1.6 -4.4 M-2.8 -5.6 L-1.4 -4.4 L-2.8 -3" fill="none" stroke="#2e2e2e" stroke-width="0.7" /></g></g>
<g transform="translate(12.4 160)"><rect x="-4" y="-3.2" width="6.6" height="7.4" fill="#e4e4e4" stroke="#c6c6c6" stroke-width="0.6"/><rect x="-2.2" y="-1.6" width="3.4" height="4.6" fill="#f4f4f4" stroke="#c6c6c6" stroke-width="0.5"/><path d="M0 -4.6 C2 -5 3.4 -4 3.6 -2.6 M2.4 -3.2 L3.6 -2.2 L4.6 -3.6" fill="none" stroke="#c6c6c6" stroke-width="0.6" /></g>
<g transform="translate(12.4 170.8)"><rect x="-4.6" y="-2.6" width="5" height="5.4" fill="#fff" stroke="#2e2e2e" stroke-width="0.8"/><rect x="2.4" y="-4.4" width="2" height="2.2" fill="#fff" stroke="#999" stroke-width="0.5"/><rect x="2.4" y="-1.2" width="2" height="2.2" fill="#fff" stroke="#999" stroke-width="0.5"/><rect x="2.4" y="2" width="2" height="2.2" fill="#fff" stroke="#999" stroke-width="0.5"/><path d="M0.4 0 H2.4" fill="none" stroke="#7d7d7d" stroke-width="0.5" /></g>
<g transform="translate(12.4 181.7)"><circle cx="-2.6" cy="-2.6" r="1.7" fill="none" stroke="#2e2e2e" stroke-width="0.7"/><circle cx="2.6" cy="3" r="1.7" fill="#ccc" stroke="#999" stroke-width="0.6"/><path d="M0 -2.8 H4 M2.8 -4 L4.2 -2.8 L2.8 -1.6" fill="none" stroke="#2e2e2e" stroke-width="0.7" /><path d="M0.2 3 H-4 M-2.8 1.8 L-4.2 3 L-2.8 4.2" fill="none" stroke="#999" stroke-width="0.6" /></g>
<g transform="translate(12.4 211.4)"><rect x="-4.6" y="-4.6" width="4.6" height="5.8" fill="#eee" stroke="#888" stroke-width="0.6"/><path d="M-3.6 -0.6 L-2.4 -3.4 L-1 -0.6" fill="none" stroke="#7d7d7d" stroke-width="0.5" /><path d="M1 1.4 L4 4.2 M4.2 1.8 V4.4 H1.8" fill="none" stroke="#2e2e2e" stroke-width="0.8" /></g>
<g transform="translate(12.4 222.4)"><text x="-5" y="-1.2" font-size="4.8" fill="#333" font-weight="normal" text-anchor="start" letter-spacing="-0.35">XRF</text><rect x="-4.4" y="-0.4" width="3.6" height="4.6" fill="#fff" stroke="#999" stroke-width="0.5"/><path d="M1 1.4 L4 4.2 M4.2 1.8 V4.4 H1.8" fill="none" stroke="#2e2e2e" stroke-width="0.8" /></g>
<g transform="translate(12.4 233.4)"><rect x="-4.8" y="-4.6" width="6.6" height="5.4" fill="#4a4a4a" stroke="#2e2e2e" stroke-width="0.5"/><path d="M-4.2 0.2 L-2.6 -3.6 L-1.6 -0.6 L1.4 0.2" fill="none" stroke="#eee" stroke-width="0.6" /><path d="M-4.8 2 H2" fill="none" stroke="#888" stroke-width="0.6" /><path d="M1.6 4.6 L4.4 2 M2.2 1.8 H4.6 V4.2" fill="none" stroke="#2e2e2e" stroke-width="0.7" /></g>
<g transform="translate(12.4 244.2)"><rect x="-4.8" y="-4.6" width="6.6" height="5.4" fill="#fff" stroke="#2e2e2e" stroke-width="0.6"/><path d="M-4.2 -0.6 L-2.6 -3.6 L-1.6 -1.6 H1.4" fill="#555" stroke="#2e2e2e" stroke-width="0.7" /><path d="M-4.8 2 H2" fill="none" stroke="#888" stroke-width="0.6" /><path d="M1.6 4.6 L4.4 2 M2.2 1.8 H4.6 V4.2 M3 -2 L4.8 0 M4.8 -2 L3 0" fill="none" stroke="#2e2e2e" stroke-width="0.6" /></g>
<g transform="translate(12.4 255.2)"><path d="M-4.2 -4.6 V0.6 M-2.4 -3 V1 M-0.4 -4.6 V0.4" fill="none" stroke="#777" stroke-width="0.8" /><rect x="-4.8" y="-1.6" width="5.6" height="3" fill="none" stroke="#999" stroke-width="0.5"/><path d="M1.6 4.6 L4.4 2 M2.2 1.8 H4.6 V4.2 M2.6 -4.4 L4.6 -1 M4.6 -4.4 L2.6 -1" fill="none" stroke="#2e2e2e" stroke-width="0.6" /></g>
<g transform="translate(12.4 266)"><rect x="-4.8" y="-4.4" width="6.8" height="5.2" fill="#fff" stroke="#2e2e2e" stroke-width="0.7"/><path d="M-4.8 2.2 H2" fill="none" stroke="#888" stroke-width="0.6" /><path d="M1.6 4.6 L4.4 2 M2.2 1.8 H4.6 V4.2 M3 -4.6 L4.6 -3 M4.6 -4.6 L3 -3" fill="none" stroke="#2e2e2e" stroke-width="0.6" /></g>
<g transform="translate(12.4 277)"><rect x="-4.8" y="-4.6" width="6.6" height="5.4" fill="#4a4a4a" stroke="#2e2e2e" stroke-width="0.5"/><path d="M-4.2 0.2 L-2.6 -3.6 L-1.6 -0.6 L1.4 0.2" fill="none" stroke="#eee" stroke-width="0.6" /><path d="M-4.8 2 H2" fill="none" stroke="#888" stroke-width="0.6" /><path d="M1.6 4.6 L4.4 2 M2.2 1.8 H4.6 V4.2" fill="none" stroke="#2e2e2e" stroke-width="0.7" /></g>
<g transform="translate(12.4 288)"><path d="M-5 -1.4 L-2.8 -3.8 H2.8 L5 -1.4 L0 4.2z" fill="#2f8cf8"/><path d="M-5 -1.4 H5 L0 4.2z" fill="#1e74ea"/><path d="M-2.8 -3.8 L-1.6 -1.4 L0 -3.8 L1.6 -1.4 L2.8 -3.8" fill="none" stroke="#8cc4ff" stroke-width="0.4"/></g>
<g transform="translate(12.4 298.6)"><rect x="-4.8" y="-4.6" width="4.6" height="4.6" fill="#ddd" stroke="#666" stroke-width="0.6"/><path d="M-3.8 -0.8 L-2.8 -3.4 L-1.8 -1.4" fill="none" stroke="#2e2e2e" stroke-width="0.5" /><path d="M1.4 -3.6 C4.6 -3.6 4.6 1 1.6 2.6 L-0.6 4 M-0.8 1.8 L-1 4.2 L1.4 4.4" fill="none" stroke="#2e2e2e" stroke-width="0.7" /><path d="M2 -2.2 L3.6 -3.8 L4.8 -1.8" fill="none" stroke="#2e2e2e" stroke-width="0.6" /></g>
<g transform="translate(12.4 309.8)"><rect x="-4.8" y="-4.8" width="4.6" height="4.6" fill="#ddd" stroke="#666" stroke-width="0.6"/><path d="M-3.8 -1 L-2.8 -3.6 L-1.8 -1.6" fill="none" stroke="#2e2e2e" stroke-width="0.5" /><path d="M-2.6 0.6 V3.4 H-0.6" fill="none" stroke="#7d7d7d" stroke-width="0.6" /><text x="-0.4" y="4.8" font-size="3.6" fill="#2e2e2e" font-weight="normal" text-anchor="start" >1</text><path d="M1.8 4.4 H3 M3.6 2.4 V4.6 M4.6 2.4 V4.6" fill="none" stroke="#2e2e2e" stroke-width="0.5" /></g>
<g transform="translate(12.4 339.5)"><rect x="-4.1" y="-4" width="8.6" height="8.2" fill="#fdf0e0" stroke="#8a7a6a" stroke-width="0.6"/><rect x="-4.4" y="-4.4" width="9.2" height="1.7" fill="#5a5a5a"/><path d="M-3 3.2 L-2 -1.6 L-1 2.2 L0.4 1 L1.4 2.8 L3.6 3.1" fill="none" stroke="#c98a48" stroke-width="0.7" /><path d="M-3.2 3.5 H3.8" fill="none" stroke="#c98a48" stroke-width="0.5" /></g>
<g transform="translate(12.4 350.6)"><rect x="-4.1" y="-4" width="8.6" height="8.2" fill="#fff" stroke="#7a7a7a" stroke-width="0.6"/><rect x="-4.4" y="-4.4" width="9.2" height="1.7" fill="#5a5a5a"/><path d="M-1.4 -2.6 V4.2 M1.6 -2.6 V4.2 M-4.1 1.6 H4.5" fill="none" stroke="#999" stroke-width="0.5" /><path d="M-2.8 -1.4 V0.8 M0 -1.5 L0.2 0.8 M3 -1.4 V0.8" fill="none" stroke="#d9892a" stroke-width="0.9" /></g>
<g transform="translate(12.4 361.4)"><path d="M-4.6 4.6 V-0.6 L-3 -2.4 L-1.6 -0.4 L0 -3.6 L1.6 -0.6 L3 -2.6 L4.6 -0.6 V4.6z" fill="#dcdcdc" stroke="#c6c6c6" stroke-width="0.5" /><path d="M-2.8 -0.4 V4.4 M-1 -0.4 V4.4 M0.8 -0.4 V4.4 M2.6 -0.4 V4.4" fill="none" stroke="#f4f4f4" stroke-width="0.5" /><path d="M-1 -4.8 L1.6 -4 L0.4 -3" fill="none" stroke="#c6c6c6" stroke-width="0.6" /></g>
<g transform="translate(12.4 372.5)"><text x="-5" y="-0.2" font-size="5.4" fill="#b0b0b0" font-weight="normal" text-anchor="start" letter-spacing="-0.3">PDF</text><path d="M-4.8 4 L-3 3.4 L-2 1.6 L-1 3.8 L0 2 L1 3.8 L2.4 3.2 L4.8 4" fill="none" stroke="#c6c6c6" stroke-width="0.6" /></g>
<g transform="translate(12.4 402.4)"><path d="M-4.6 4.4 V-1 L-3 -2.6 L-1.6 -0.6 L0 -3 L1.6 -0.6 L3 -2.6 L4.6 -1 V4.4z" fill="#dadada" stroke="#c6c6c6" stroke-width="0.5" /><path d="M-2.6 -4.8 H2.6 L0.6 -2.6 V0 L-0.6 -0.6 V-2.6z" fill="#eee" stroke="#aaa" stroke-width="0.5" /><path d="M-2.8 0 V4.2 M-1 0.6 V4.2 M0.8 0.6 V4.2 M2.6 0 V4.2" fill="none" stroke="#f6f6f6" stroke-width="0.5" /></g>
<g transform="translate(12.4 413.3)"><path d="M-4.8 -0.6 V3.4 A2.6 1.2 0 0 0 0.4 3.4 V-0.6" fill="#ddd" stroke="#aaa" stroke-width="0.6"/><ellipse cx="-2.2" cy="-0.6" rx="2.6" ry="1.2" fill="#eee" stroke="#aaa" stroke-width="0.6"/><path d="M0 -4.8 H5 L3.2 -2.8 V0.4 L1.8 -0.4 V-2.8z" fill="#bbb" stroke="#888" stroke-width="0.6" /></g>
<g transform="translate(12.4 424)"><path d="M-4.8 4.4 L-3.6 -4.6 L-2.6 3.4 L-1.4 1.6 C0 4.4 1.6 3 2.6 4 L4.8 4.4" fill="none" stroke="#aaa" stroke-width="0.6" /><circle cx="1" cy="-2.6" r="1.9" fill="#eee" stroke="#999" stroke-width="0.6"/><path d="M2.33 -1.27 l1.71 1.71" stroke="#999" stroke-width="0.8999999999999999"/></g>
<g transform="translate(12.4 435)"><circle cx="0.6" cy="-2.6" r="1.9" fill="#eee" stroke="#999" stroke-width="0.6"/><path d="M1.93 -1.27 l1.71 1.71" stroke="#999" stroke-width="0.8999999999999999"/><text x="-5" y="4.8" font-size="4.6" fill="#b4b4b4" font-weight="normal" text-anchor="start" >Abc</text></g>
<g transform="translate(12.4 446)"><circle cx="1" cy="-2.6" r="1.9" fill="#eee" stroke="#999" stroke-width="0.6"/><path d="M2.33 -1.27 l1.71 1.71" stroke="#999" stroke-width="0.8999999999999999"/><text x="-4.8" y="4.8" font-size="4.4" fill="#b4b4b4" font-weight="normal" text-anchor="start" >123</text></g>
<g transform="translate(12.4 456.6)"><path d="M-5.12 2.28 L-4.11 1.85 L-3.39 -1.32 L-2.82 1.56 L-2.10 0.84 L-1.38 -4.20 L-0.66 1.27 L0.21 1.85 L1.72 2.14 L3.52 2.21" fill="none" stroke="#555" stroke-width="0.5" /><path d="M-5 3.6 C-2 4.4 0 3.2 2 3.8 L5 4" fill="none" stroke="#cc3aa2" stroke-width="0.9" /><path d="M1.8 -4.6 L4.2 -2.2 M4.2 -4.6 L1.8 -2.2" fill="none" stroke="#2e2e2e" stroke-width="0.7" /></g>
<g transform="translate(12.4 467.7)"><path d="M-3 4 L-1.8 -4.6 L-0.6 4z" fill="#a4dab4" stroke="#2aa04a" stroke-width="0.4" /><path d="M-2.5 4 L-1.8 -3 L-1.1 4" fill="none" stroke="#2aa04a" stroke-width="0.6" /><circle cx="-1.4" cy="-2.8" r="1.9" fill="none" stroke="#2e2e2e" stroke-width="0.7"/><path d="M0 -1.4 L1.8 0.6" fill="none" stroke="#2e2e2e" stroke-width="1.0" /><path d="M-4.8 4.4 H-3 M0 3.4 C1.4 2.6 2 4.4 3 4.2 L4.8 4.6" fill="none" stroke="#2e2e2e" stroke-width="0.5" /></g>
<g transform="translate(12.4 478.6)"><path d="M-3.8 4 L-2.6 -4.4 L-1.2 4z" fill="#a4dab4" stroke="#2aa04a" stroke-width="0.4" /><path d="M-3.2 4 L-2.6 -3 L-1.9 4" fill="none" stroke="#2aa04a" stroke-width="0.6" /><path d="M-1.8 -4 C0.6 -4.6 2 -2 4.4 0.8 M-0.8 -2 C0.8 -1.6 1.6 0.2 3.4 2" fill="none" stroke="#2e2e2e" stroke-width="0.7" /><path d="M-4.8 4.4 H-3 M0 3.4 C1.4 2.6 2 4.4 3 4.2 L4.8 4.6" fill="none" stroke="#2e2e2e" stroke-width="0.5" /></g>
<g transform="translate(12.4 489.5)"><path d="M-4.70 0.20 L-3.93 -0.13 L-3.38 -2.55 L-2.94 -0.35 L-2.39 -0.90 L-1.84 -4.75 L-1.29 -0.57 L-0.63 -0.13 L0.53 0.09 L1.90 0.15" fill="none" stroke="#c6c6c6" stroke-width="0.5" /><path d="M1.8 -4.4 L4 -2.2 M4 -4.4 L1.8 -2.2" fill="none" stroke="#c6c6c6" stroke-width="0.6" /><text x="-5.2" y="4.9" font-size="5" fill="#c6c6c6" font-weight="normal" text-anchor="start" letter-spacing="-0.3">Kα2</text></g>
<g transform="translate(12.4 500.6)"><path d="M-4.8 4.2 L-3.6 0.4 L-2.8 3.8 L-1.6 -2.8 L-0.6 4 L0.4 1.6 L1.2 4 L2.2 3 L3 4.2 L4.8 4.2" fill="none" stroke="#cc3aa2" stroke-width="0.9" /><text x="1.2" y="-0.4" font-size="5.6" fill="#222" font-weight="bold" text-anchor="start" font-style="italic" font-family="Liberation Serif">F</text></g>
<g transform="translate(12.4 511.5)"><path d="M-5 4.2 L-3.6 -3.6 L-2.4 3.6 L-1.6 1.2 L-0.8 4 L0 4" fill="none" stroke="#cc3aa2" stroke-width="0.9" /><path d="M0.4 -2.6 H4.4 V-1 H-0.4z M1 -3.4 C2 -4.6 4 -4.4 4.2 -2.6" fill="none" stroke="#2e2e2e" stroke-width="0.6" /><path d="M2 0.6 V3.6 M0.8 2.4 L2 3.8 L3.2 2.4" fill="none" stroke="#2e2e2e" stroke-width="0.7" /></g>
<g transform="translate(12.4 522.4)"><path d="M-5 4.2 L-4 -0.6 L-3.2 4.2 L-2.4 -3.8 L-1.4 4.2 L-0.8 1 L-0.2 4.2 L4.4 4.2z" fill="#e596cf" stroke="#cc3aa2" stroke-width="0.6" /><path d="M1.2 -2.8 H4.8 M2.8 -4.4 L1.2 -2.8 L2.8 -1.2" fill="none" stroke="#2e2e2e" stroke-width="0.7" /></g>
<g transform="translate(12.4 533.4)"><path d="M-4.6 -3.6 V3.4" fill="none" stroke="#999" stroke-width="0.5" /><path d="M-3.92 2.88 L-3.05 2.51 L-2.43 -0.22 L-1.94 2.26 L-1.32 1.64 L-0.70 -2.70 L-0.08 2.01 L0.67 2.51 L1.97 2.76 L3.52 2.82" fill="none" stroke="#999" stroke-width="0.5" /><path d="M-4.8 4.2 H4.8" fill="none" stroke="#cc3aa2" stroke-width="1.0" /><path d="M-1 -3.2 H4.6 M0.2 -4.4 L-1 -3.2 L0.2 -2 M3.4 -4.4 L4.6 -3.2 L3.4 -2" fill="none" stroke="#2e2e2e" stroke-width="0.6" /></g>
<g clip-path="url(#lp)">
<g transform="translate(12.4 543.8)"><path d="M-4.4 -4.6 V4" fill="none" stroke="#cc3aa2" stroke-width="1.0" /><path d="M-5.4 -3.4 L-4.4 -4.8 L-3.4 -3.4" fill="none" stroke="#cc3aa2" stroke-width="0.6" /><rect x="0.8" y="-4.6" width="3.8" height="3.6" fill="#999" stroke="#2e2e2e" stroke-width="0.6"/></g>
</g>
</svg>
</div>
</body></html>
